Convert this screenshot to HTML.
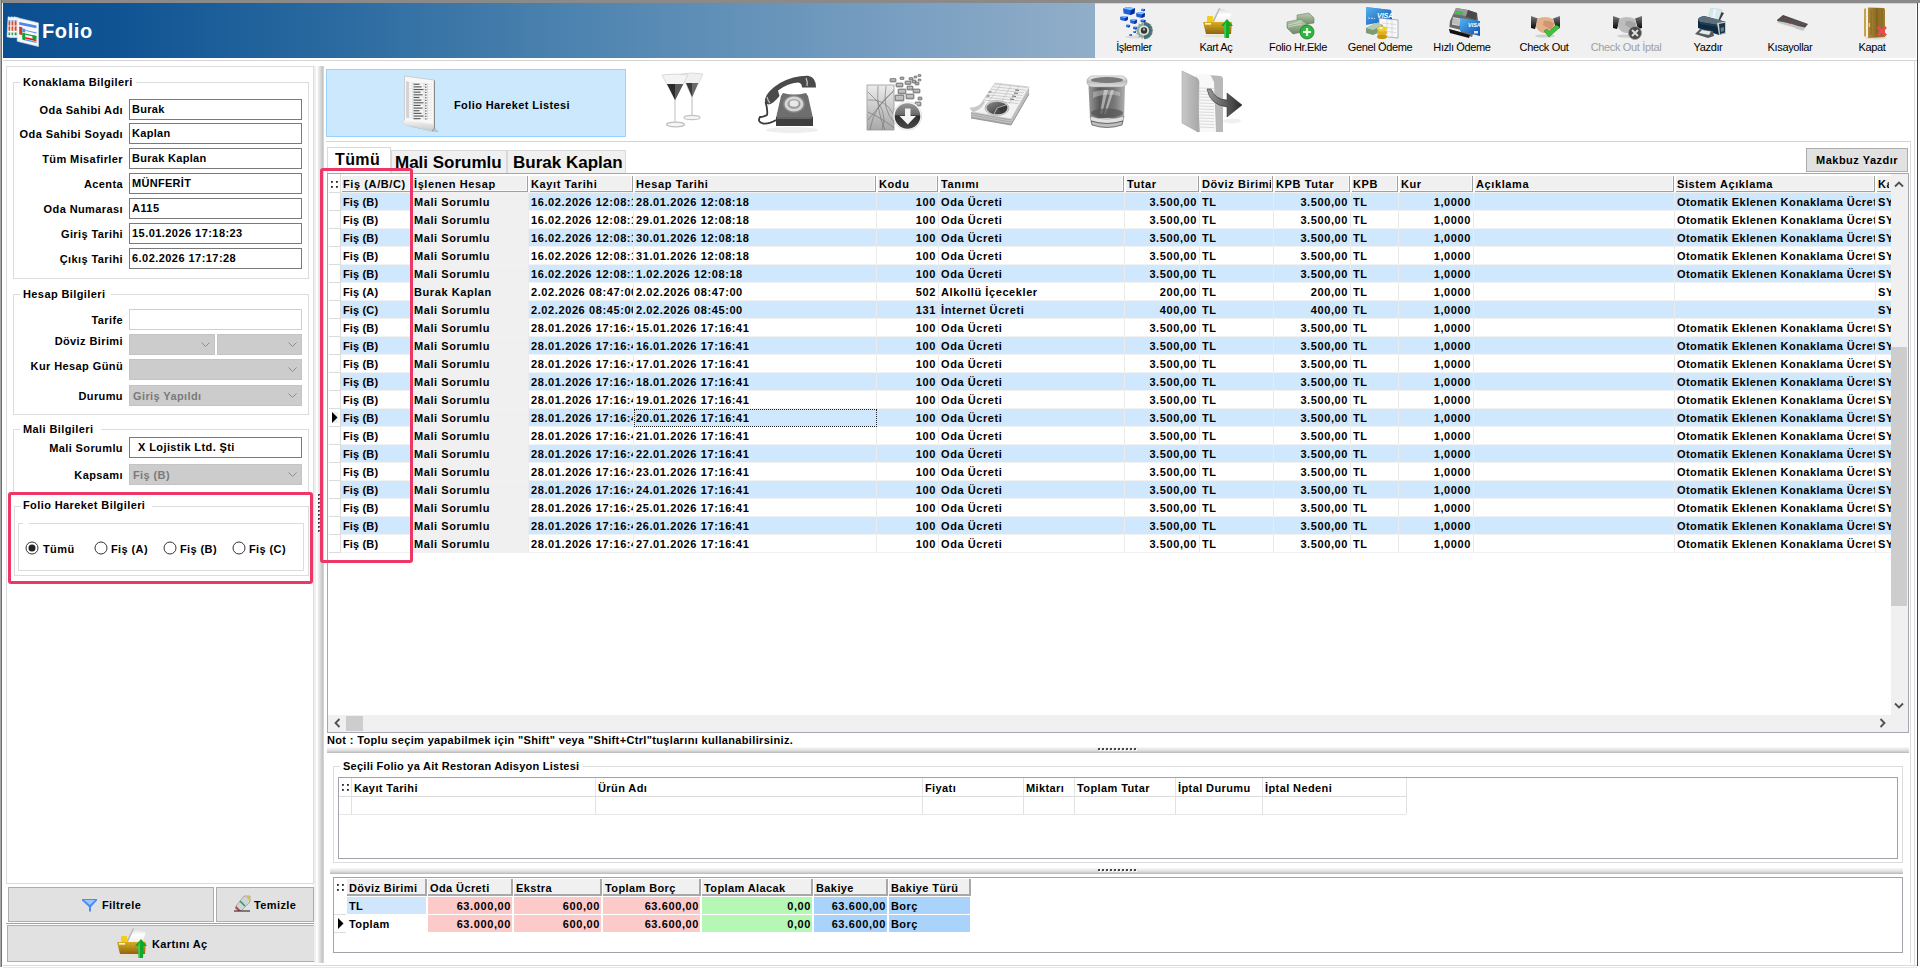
<!DOCTYPE html><html><head><meta charset="utf-8"><style>
html,body{margin:0;padding:0;}
body{width:1920px;height:969px;overflow:hidden;position:relative;background:#fff;font-family:"Liberation Sans",sans-serif;font-weight:bold;font-size:11px;color:#000;}
body div{position:absolute;box-sizing:border-box;}
.t{white-space:nowrap;}
svg{position:absolute;overflow:visible;}
</style></head><body>
<svg width="0" height="0" style="position:absolute"><defs>
<linearGradient id="gBlue" x1="0" y1="0" x2="1" y2="1"><stop offset="0" stop-color="#6fb7ff"/><stop offset="1" stop-color="#0b49c9"/></linearGradient>
<linearGradient id="gFold" x1="0" y1="0" x2="0" y2="1"><stop offset="0" stop-color="#f6d24a"/><stop offset="1" stop-color="#a77a12"/></linearGradient>
<linearGradient id="gGreen" x1="0" y1="0" x2="1" y2="0"><stop offset="0" stop-color="#35d04a"/><stop offset="1" stop-color="#0a8a1c"/></linearGradient>
<linearGradient id="gMoney" x1="0" y1="0" x2="0" y2="1"><stop offset="0" stop-color="#b9cdb0"/><stop offset="1" stop-color="#6f8a66"/></linearGradient>
<linearGradient id="gCard" x1="0" y1="0" x2="1" y2="1"><stop offset="0" stop-color="#55b4f0"/><stop offset="1" stop-color="#0b4fb0"/></linearGradient>
<linearGradient id="gDoor" x1="0" y1="0" x2="1" y2="0"><stop offset="0" stop-color="#c9a35a"/><stop offset="1" stop-color="#7a5a1c"/></linearGradient>
<linearGradient id="gSleeve" x1="0" y1="0" x2="0" y2="1"><stop offset="0" stop-color="#777"/><stop offset="1" stop-color="#050505"/></linearGradient>
<linearGradient id="gGray" x1="0" y1="0" x2="1" y2="0"><stop offset="0" stop-color="#bdbdbd"/><stop offset="0.5" stop-color="#eeeeee"/><stop offset="1" stop-color="#9a9a9a"/></linearGradient>
<linearGradient id="gDark" x1="0" y1="0" x2="0" y2="1"><stop offset="0" stop-color="#8a8a8a"/><stop offset="1" stop-color="#3a3a3a"/></linearGradient>
<radialGradient id="gCoin" cx="0.4" cy="0.4" r="0.7"><stop offset="0" stop-color="#ffe97a"/><stop offset="1" stop-color="#c98f10"/></radialGradient>
<linearGradient id="gTrash" x1="0" y1="0" x2="1" y2="0"><stop offset="0" stop-color="#9a9a9a"/><stop offset="0.3" stop-color="#5a5a5a"/><stop offset="0.7" stop-color="#777"/><stop offset="1" stop-color="#b0b0b0"/></linearGradient>
</defs></svg>
<div style="left:0px;top:0px;width:1920px;height:3px;background:#8a8a8a;"></div>
<div style="left:0px;top:0px;width:1px;height:967px;background:#a8a8a8;"></div>
<div style="left:1px;top:0px;width:1px;height:967px;background:#6e6e6e;"></div>
<div style="left:1917px;top:3px;width:1px;height:963px;background:#0a4fb4;"></div>
<div style="left:3px;top:965px;width:1914px;height:1px;background:#dadada;"></div>
<div style="left:3px;top:967px;width:1914px;height:1px;background:#e8e8e8;"></div>
<div style="left:3px;top:3px;width:1092px;height:55px;background:linear-gradient(90deg,#0b4f90 0%,#0f5393 10%,#2a6aa0 30%,#5186b1 55%,#769dc0 80%,#91aec9 100%);"></div>
<svg style="left:7px;top:15px" width="32" height="32" viewBox="2 1 31.5 36.5" preserveAspectRatio="none"><path d="M3 3 L7 4 L7 27 L2 26 Z" fill="#f4f7fb" stroke="#dfe6ee" stroke-width="0.5"/><rect x="3.5" y="7" width="2" height="2" fill="#5a8de8"/><rect x="3.5" y="9" width="2" height="4" fill="#d04a2a"/><rect x="3.5" y="14" width="2" height="3" fill="#d04a2a"/><rect x="3.5" y="17" width="2" height="2" fill="#d04a2a"/><rect x="3.5" y="21" width="2" height="3" fill="#1a9a3a"/><path d="M6 3 L10 4 L10 27 L5 26 Z" fill="#f4f7fb" stroke="#dfe6ee" stroke-width="0.5"/><rect x="6.5" y="7" width="2" height="2" fill="#5a8de8"/><rect x="6.5" y="9" width="2" height="4" fill="#d04a2a"/><rect x="6.5" y="14" width="2" height="3" fill="#d04a2a"/><rect x="6.5" y="17" width="2" height="2" fill="#d04a2a"/><rect x="6.5" y="21" width="2" height="3" fill="#1a9a3a"/><path d="M9 3 L13 4 L13 27 L8 26 Z" fill="#f4f7fb" stroke="#dfe6ee" stroke-width="0.5"/><rect x="9.5" y="7" width="2" height="2" fill="#5a8de8"/><rect x="9.5" y="9" width="2" height="4" fill="#d04a2a"/><rect x="9.5" y="14" width="2" height="3" fill="#d04a2a"/><rect x="9.5" y="17" width="2" height="2" fill="#d04a2a"/><rect x="9.5" y="21" width="2" height="3" fill="#1a9a3a"/><path d="M12 4 L33 10 L33 37 L12 31 Z" fill="#f6f8fb" stroke="#d9dee6" stroke-width="0.6"/><path d="M14 9 L31 13 L31 16 L14 12 Z" fill="#4f86ea"/><path d="M14 14 L17 15 L17 24 L14 23 Z" fill="#d23a1a"/><path d="M17 16 L20 17 L20 21 L17 20 Z" fill="#5a8cf0"/><path d="M17 21 L20 21.7 L20 30 L17 29 Z" fill="#12a52c"/><path d="M20 18 L31 21 L31 22 L20 19 Z" fill="#4f86ea"/><path d="M20 22 L31 25 L31 26.5 L20 23.5 Z" fill="#12a52c"/><path d="M27 24 L31 25 L31 29 L27 28 Z" fill="#12a52c"/><path d="M20 26 L31 29 L31 31 L20 28 Z" fill="#e82010"/><path d="M20 28.5 L31 31.5 L31 33 L20 30 Z" fill="#5a9af0"/></svg>
<div class="t " style="left:42px;top:18.07px;font-size:20px;line-height:26px;color:#fff;letter-spacing:0.6px;">Folio</div>
<div style="left:1095px;top:3px;width:822px;height:1px;background:#c9d8e6;"></div>
<div style="left:1095px;top:4px;width:821px;height:54px;background:#f0f0f0;"></div>
<div style="left:3px;top:60px;width:1914px;height:1px;background:#d4d4d4;"></div>
<svg style="left:1115px;top:4px" width="42" height="38" viewBox="0 0 42 38"><path d="M8 4.6 L12.2 3 L20 4.2 L19.4 9.4 L15.2 11 L8.6 9.4 Z" fill="#1f5fd8"/><path d="M8 4.6 L12.2 3 L20 4.2 L15.8 6.2 Z" fill="#7cc0ff"/><path d="M15.8 6.2 L20 4.2 L19.4 9.4 L15.2 11 Z" fill="#0a2a9a"/><path d="M26 5.22 L27.4 4.7 L30 5.09 L29.8 6.78 L28.4 7.3 L26.2 6.78 Z" fill="#1f5fd8"/><path d="M26 5.22 L27.4 4.7 L30 5.09 L28.6 5.74 Z" fill="#7cc0ff"/><path d="M28.6 5.74 L30 5.09 L29.8 6.78 L28.4 7.3 Z" fill="#0a2a9a"/><path d="M21.0 9.2 L24.15 8 L30.0 8.9 L29.55 12.8 L26.4 14 L21.45 12.8 Z" fill="#1f5fd8"/><path d="M21.0 9.2 L24.15 8 L30.0 8.9 L26.85 10.4 Z" fill="#7cc0ff"/><path d="M26.85 10.4 L30.0 8.9 L29.55 12.8 L26.4 14 Z" fill="#0a2a9a"/><path d="M5 13.0 L7.8 12.0 L13 12.75 L12.6 16.0 L9.8 17.0 L5.4 16.0 Z" fill="#1f5fd8"/><path d="M5 13.0 L7.8 12.0 L13 12.75 L10.2 14.0 Z" fill="#7cc0ff"/><path d="M10.2 14.0 L13 12.75 L12.6 16.0 L9.8 17.0 Z" fill="#0a2a9a"/><path d="M15.0 16.0 L17.45 15.0 L22.0 15.75 L21.65 19.0 L19.2 20.0 L15.35 19.0 Z" fill="#1f5fd8"/><path d="M15.0 16.0 L17.45 15.0 L22.0 15.75 L19.55 17.0 Z" fill="#7cc0ff"/><path d="M19.55 17.0 L22.0 15.75 L21.65 19.0 L19.2 20.0 Z" fill="#0a2a9a"/><path d="M25.5 16.1 L27.25 15.5 L30.5 15.95 L30.25 17.9 L28.5 18.5 L25.75 17.9 Z" fill="#1f5fd8"/><path d="M25.5 16.1 L27.25 15.5 L30.5 15.95 L28.75 16.7 Z" fill="#7cc0ff"/><path d="M28.75 16.7 L30.5 15.95 L30.25 17.9 L28.5 18.5 Z" fill="#0a2a9a"/><path d="M11 21.1 L12.4 20.5 L15 20.95 L14.8 22.9 L13.4 23.5 L11.2 22.9 Z" fill="#1f5fd8"/><path d="M11 21.1 L12.4 20.5 L15 20.95 L13.6 21.7 Z" fill="#7cc0ff"/><path d="M13.6 21.7 L15 20.95 L14.8 22.9 L13.4 23.5 Z" fill="#0a2a9a"/><path d="M18 23.1 L19.4 22.5 L22 22.95 L21.8 24.9 L20.4 25.5 L18.2 24.9 Z" fill="#1f5fd8"/><path d="M18 23.1 L19.4 22.5 L22 22.95 L20.6 23.7 Z" fill="#7cc0ff"/><path d="M20.6 23.7 L22 22.95 L21.8 24.9 L20.4 25.5 Z" fill="#0a2a9a"/><path d="M18.0 27.4 L19.05 27 L21.0 27.3 L20.85 28.6 L19.8 29 L18.15 28.6 Z" fill="#1f5fd8"/><path d="M18.0 27.4 L19.05 27 L21.0 27.3 L19.95 27.8 Z" fill="#7cc0ff"/><path d="M19.95 27.8 L21.0 27.3 L20.85 28.6 L19.8 29 Z" fill="#0a2a9a"/><path d="M14.0 30.4 L15.05 30 L17.0 30.3 L16.85 31.6 L15.8 32 L14.15 31.6 Z" fill="#1f5fd8"/><path d="M14.0 30.4 L15.05 30 L17.0 30.3 L15.95 30.8 Z" fill="#7cc0ff"/><path d="M15.95 30.8 L17.0 30.3 L16.85 31.6 L15.8 32 Z" fill="#0a2a9a"/><ellipse cx="22" cy="33" rx="12" ry="1.5" fill="#ccc" opacity="0.6"/><polygon points="37.80,26.50 35.63,28.01 36.93,30.32 34.32,30.74 34.49,33.38 31.95,32.63 30.96,35.08 29.00,33.30 27.04,35.08 26.05,32.63 23.51,33.38 23.68,30.74 21.07,30.32 22.37,28.01 20.20,26.50 22.37,24.99 21.07,22.68 23.68,22.26 23.51,19.62 26.05,20.37 27.04,17.92 29.00,19.70 30.96,17.92 31.95,20.37 34.49,19.62 34.32,22.26 36.93,22.68 35.63,24.99" fill="#8fa8a0"/><path d="M29 17.7 A8.8 8.8 0 0 1 29 35.3 Z" fill="#2e5a66" opacity="0.75"/><circle cx="29" cy="26.5" r="5" fill="#dfe8d8"/><circle cx="29" cy="26.5" r="3.2" fill="#333"/><circle cx="29" cy="25.5" r="1.2" fill="#aaa"/></svg>
<svg style="left:1195px;top:3px" width="45" height="39" viewBox="0 0 45 39"><defs><linearGradient id="gPap" x1="0" y1="0" x2="0" y2="1"><stop offset="0" stop-color="#d8d8d8"/><stop offset="0.5" stop-color="#ffffff"/><stop offset="1" stop-color="#f0f0f0"/></linearGradient><linearGradient id="gFold2" x1="0" y1="0" x2="0" y2="1"><stop offset="0" stop-color="#d8ae22"/><stop offset="1" stop-color="#8f6410"/></linearGradient></defs><path d="M17 19 L24 5 L37 9.5 L33 19 Z" fill="url(#gPap)"/><path d="M17 19 L24 5 L25 6 L19 19 Z" fill="#b8b8b8"/><path d="M12 14 Q12 13 13 13 L17 13 Q18 13 18 14 L18 19 L12 19 Z" fill="#f2cc18"/><path d="M8 19 L37 19 L36 31 L11 31 Z" fill="url(#gFold2)"/><rect x="10" y="20" width="6" height="1.6" fill="#fff4c8"/><ellipse cx="22" cy="33" rx="13" ry="1.5" fill="#e8dcc0" opacity="0.7"/><path d="M32 16 L38 23 L34.5 23 L34 35 L29.5 35 L29 23 L26 23 Z" fill="#10a828"/><path d="M32 16 L29 23 L29.5 35 L31 35 L31 19 Z" fill="#5ee070" opacity="0.6"/></svg>
<svg style="left:1285px;top:12px" width="32" height="32" viewBox="0 0 32 32"><path d="M12 3 L24 1 L29 6 L29 11 L17 13 L12 8 Z" fill="url(#gMoney)" stroke="#5c7356" stroke-width="0.5"/><path d="M2 10 L16 7 L22 12 L22 19 L8 22 L2 16 Z" fill="url(#gMoney)" stroke="#5c7356" stroke-width="0.5"/><path d="M3 13 L16 10 M3 15 L17 12" stroke="#e8f0e0" stroke-width="0.6"/><circle cx="22" cy="20" r="7" fill="#2db83d" stroke="#1a7a26" stroke-width="0.8"/><path d="M22 16 L22 24 M18 20 L26 20" stroke="#e8ffe8" stroke-width="2.2"/></svg>
<svg style="left:1360px;top:4px" width="42" height="38" viewBox="0 0 42 38"><path d="M6 3 L31 6 L32 15 L6 20 Z" fill="url(#gCard)"/><path d="M6 3 L31 6 L32 16 L6 21 Z" fill="url(#gCard)"/><text x="17" y="13.5" font-size="7" font-weight="bold" fill="#fff" font-family="Liberation Sans" font-style="italic">VISA</text><path d="M8 14 L15 14.5" stroke="#bfe0ff" stroke-width="1" stroke-dasharray="2 1"/><path d="M19 14 L38 16 L38 34 L19 32 Z" fill="#f8f8f8" stroke="#7d96aa" stroke-width="0.7"/><path d="M22 19 L36 20.5 M22 23 L36 24.5 M22 27 L36 28.5 M27 15 L27 33 M32 15.5 L32 33.5" stroke="#c8c8c8" stroke-width="0.6"/><path d="M6 24 L16 19 L23 21 L23 27 L13 31 L6 29 Z" fill="#7d9a78"/><path d="M6 24 L16 19 L23 21 L13 26 Z" fill="#b4ccb0"/><ellipse cx="22" cy="32.5" rx="5" ry="2.6" fill="#c9960e"/><ellipse cx="22" cy="28.5" rx="5" ry="2.6" fill="#e0b020"/><ellipse cx="22" cy="24.8" rx="5" ry="2.6" fill="#f2cc30"/><ellipse cx="21" cy="24" rx="2" ry="1" fill="#fff6b0"/></svg>
<svg style="left:1440px;top:3px" width="42" height="38" viewBox="0 0 42 38"><path d="M16 5 L28 7 L37 10 L38 17 L32 34 L9 27 L10 18 Z" fill="#6a6a6a"/><path d="M16 5 L28 7 L26 13 L14 11 Z" fill="#9a9a9a"/><path d="M28 7 L37 10 L36 17 L26 14 Z" fill="#4a4a4a"/><path d="M16 8 L23 9.5 L22.5 12 L15.5 10.5 Z" fill="#28d428" stroke="#8a6aa0" stroke-width="0.4"/><path d="M13 14 L20 15.5 L19.5 23 L12 21.5 Z" fill="#dcdcdc"/><path d="M14 15 L14 21 M16 15.5 L16 21.5 M18 16 L18 22" stroke="#777" stroke-width="0.6"/><path d="M9 24 L21 27 L21 29 L9 26 Z" fill="#f0f0f0"/><path d="M9 26 L30 32 L29 35 L10 30 Z" fill="#111"/><path d="M20 15 L40 18 L40 33 L20 28 Z" fill="url(#gCard)"/><text x="28" y="24" font-size="5.5" font-weight="bold" font-style="italic" fill="#fff" font-family="Liberation Sans">VISA</text><rect x="34" y="28" width="4" height="2.5" fill="#dde" /></svg>
<svg style="left:1529px;top:9px" width="34" height="32" viewBox="0 0 34 32"><path d="M2 7 L9 9.5 L6 20 L2 19 Z" fill="url(#gSleeve)"/><path d="M31 7 L24 9.5 L27 20 L31 19 Z" fill="url(#gSleeve)"/><path d="M8 10 Q16 6 24 10 L26 18 Q22 24 16 24 Q10 24 7 18 Z" fill="#e2b08a"/><path d="M15 12 Q21 11 25 15 L22 21 Q18 18 14 16 Z" fill="#c98a62" opacity="0.7"/><ellipse cx="16" cy="27" rx="10" ry="1.6" fill="#bbb" opacity="0.6"/><path d="M15 22 L20 28 L31 18 L27 16 L20 23 L18 20 Z" fill="#3cc43c" stroke="#1f8f1f" stroke-width="0.6"/></svg>
<svg style="left:1611px;top:9px" width="34" height="32" viewBox="0 0 34 32"><path d="M2 7 L9 9.5 L6 20 L2 19 Z" fill="url(#gSleeve)"/><path d="M31 7 L24 9.5 L27 20 L31 19 Z" fill="url(#gSleeve)"/><path d="M8 10 Q16 6 24 10 L26 18 Q22 24 16 24 Q10 24 7 18 Z" fill="#bdbdbd"/><path d="M15 12 Q21 11 25 15 L22 21 Q18 18 14 16 Z" fill="#9a9a9a" opacity="0.7"/><ellipse cx="16" cy="27" rx="10" ry="1.6" fill="#bbb" opacity="0.6"/><circle cx="24" cy="24" r="6.5" fill="#4a4a4a" stroke="#999" stroke-width="0.8"/><path d="M21 21 L27 27 M27 21 L21 27" stroke="#ddd" stroke-width="2"/></svg>
<svg style="left:1688px;top:3px" width="45" height="39" viewBox="0 0 45 39"><path d="M33 9 L36 10 L31 19 L29 18 Z" fill="#3a3a3a"/><path d="M23 5 L34 7 L30 18 L20 16 Z" fill="#d8eaf0" stroke="#b0c8d0" stroke-width="0.5"/><path d="M27 6 L25 17" stroke="#f4fbff" stroke-width="1.5"/><path d="M10 17 Q10 14 16 13 L31 17 L38 19 L38 30 L31 32 L10 25 Z" fill="#0d2a40"/><path d="M10 17 Q10 14 16 13 L31 17 L38 19 L30 22 L12 19 Z" fill="#5e6e7a"/><path d="M12 19 L30 22 L30 24 L12 21 Z" fill="#1e3e56"/><path d="M29 20 L38 18.5 L38 30 L31 32 Z" fill="#c8cdd0"/><path d="M31 21 L37 19.8 L37 29.5 L32 31 Z" fill="#1c3446"/><path d="M32.5 25 L36 24 L36 28 L33 29 Z" fill="#7a9ab0" opacity="0.7"/><path d="M7 31 L12 26 L25 28 L26 33 L20 35 Z" fill="#5a5a5a"/><path d="M11 30 L14 27 L23 28.5 L21 32 Z" fill="#dcecf2"/></svg>
<svg style="left:1770px;top:3px" width="45" height="39" viewBox="0 0 45 39"><path d="M7 17 L13 12 L38 21 L33 28 Q28 27 22 24 Q14 22 8 20 Z" fill="#c4c4c4"/><path d="M7 17 L13 12 L38 21 L35 24.5 Q28 23 22 21 Q14 19 7.5 18 Z" fill="#4a4a4a"/><path d="M10 16 L35 22 M12 14.5 L36 21 M9 17.5 L30 22" stroke="#777" stroke-width="0.5" stroke-dasharray="1.2 0.8"/><rect x="14.5" y="15" width="1.6" height="1.2" fill="#c82828"/><rect x="20.5" y="17.5" width="1.6" height="1.2" fill="#c82828"/><rect x="19" y="19.3" width="1.6" height="1.2" fill="#c82828"/><rect x="26.5" y="18.5" width="1.6" height="1.2" fill="#c82828"/><path d="M8 20 Q14 22 22 24 Q28 27 33 28" fill="none" stroke="#e8e8e8" stroke-width="0.8"/></svg>
<svg style="left:1860px;top:7px" width="30" height="34" viewBox="0 0 30 34"><defs><linearGradient id="gDoor2" x1="0" y1="0" x2="1" y2="0"><stop offset="0" stop-color="#b08a3a"/><stop offset="0.5" stop-color="#8a6a22"/><stop offset="1" stop-color="#a07c30"/></linearGradient></defs><ellipse cx="16" cy="31" rx="11" ry="1.5" fill="#d8d0c0" opacity="0.7"/><path d="M4 2 L6 1 L6 30 L4 29 Z" fill="#c8a050"/><path d="M6 1 L8 0.5 L8 31 L6 30 Z" fill="#f4efe0"/><path d="M8 0.5 L24 1 Q25 1.5 25 2.5 L25 30 L8 31 Z" fill="url(#gDoor2)"/><path d="M11 3 L11 28 M17 2.5 L17 28.5 M22 2.5 L22 28.5" stroke="#6a4e14" stroke-width="0.7" opacity="0.55"/><path d="M8.8 16 L10 16 L10 20 L8.8 20 Z" fill="#e8d060"/><path d="M17.5 20 L26 28.5 M26 20 L17.5 28.5" stroke="#f04658" stroke-width="2.6"/></svg>
<div class="t " style="left:1084px;top:38.69px;font-size:11px;line-height:17px;color:#000;letter-spacing:-0.35px;font-weight:normal;width:100px;text-align:center;overflow:hidden;">İşlemler</div>
<div class="t " style="left:1166px;top:38.69px;font-size:11px;line-height:17px;color:#000;letter-spacing:-0.35px;font-weight:normal;width:100px;text-align:center;overflow:hidden;">Kart Aç</div>
<div class="t " style="left:1248px;top:38.69px;font-size:11px;line-height:17px;color:#000;letter-spacing:-0.35px;font-weight:normal;width:100px;text-align:center;overflow:hidden;">Folio Hr.Ekle</div>
<div class="t " style="left:1330px;top:38.69px;font-size:11px;line-height:17px;color:#000;letter-spacing:-0.35px;font-weight:normal;width:100px;text-align:center;overflow:hidden;">Genel Ödeme</div>
<div class="t " style="left:1412px;top:38.69px;font-size:11px;line-height:17px;color:#000;letter-spacing:-0.35px;font-weight:normal;width:100px;text-align:center;overflow:hidden;">Hızlı Ödeme</div>
<div class="t " style="left:1494px;top:38.69px;font-size:11px;line-height:17px;color:#000;letter-spacing:-0.35px;font-weight:normal;width:100px;text-align:center;overflow:hidden;">Check Out</div>
<div class="t " style="left:1576px;top:38.69px;font-size:11px;line-height:17px;color:#a0a0a0;letter-spacing:-0.35px;font-weight:normal;width:100px;text-align:center;overflow:hidden;">Check Out İptal</div>
<div class="t " style="left:1658px;top:38.69px;font-size:11px;line-height:17px;color:#000;letter-spacing:-0.35px;font-weight:normal;width:100px;text-align:center;overflow:hidden;">Yazdır</div>
<div class="t " style="left:1740px;top:38.69px;font-size:11px;line-height:17px;color:#000;letter-spacing:-0.35px;font-weight:normal;width:100px;text-align:center;overflow:hidden;">Kısayollar</div>
<div class="t " style="left:1822px;top:38.69px;font-size:11px;line-height:17px;color:#000;letter-spacing:-0.35px;font-weight:normal;width:100px;text-align:center;overflow:hidden;">Kapat</div>
<div style="left:6px;top:66px;width:308px;height:818px;border:1px solid #dcdcdc;"></div>
<div style="left:13px;top:82px;width:296px;height:197px;border:1px solid #dcdcdc;"></div>
<div style="left:20px;top:76px;width:116px;height:12px;background:#fff;"></div>
<div class="t " style="left:23px;top:73.69px;font-size:11px;line-height:17px;color:#000;letter-spacing:0.4px;">Konaklama Bilgileri</div>
<div class="t " style="left:0px;top:101.69px;font-size:11px;line-height:17px;color:#000;letter-spacing:0.4px;width:123px;text-align:right;overflow:hidden;">Oda Sahibi Adı</div>
<div style="left:129px;top:99px;width:173px;height:21px;border:1px solid #7a7a7a;background:#fff;"></div>
<div class="t " style="left:132px;top:100.69px;font-size:11px;line-height:17px;color:#000;letter-spacing:0.3px;">Burak</div>
<div class="t " style="left:0px;top:125.69px;font-size:11px;line-height:17px;color:#000;letter-spacing:0.4px;width:123px;text-align:right;overflow:hidden;">Oda Sahibi Soyadı</div>
<div style="left:129px;top:123px;width:173px;height:21px;border:1px solid #7a7a7a;background:#fff;"></div>
<div class="t " style="left:132px;top:124.69px;font-size:11px;line-height:17px;color:#000;letter-spacing:0.3px;">Kaplan</div>
<div class="t " style="left:0px;top:150.69px;font-size:11px;line-height:17px;color:#000;letter-spacing:0.4px;width:123px;text-align:right;overflow:hidden;">Tüm Misafirler</div>
<div style="left:129px;top:148px;width:173px;height:21px;border:1px solid #7a7a7a;background:#fff;"></div>
<div class="t " style="left:132px;top:149.69px;font-size:11px;line-height:17px;color:#000;letter-spacing:0.3px;">Burak Kaplan</div>
<div class="t " style="left:0px;top:175.69px;font-size:11px;line-height:17px;color:#000;letter-spacing:0.4px;width:123px;text-align:right;overflow:hidden;">Acenta</div>
<div style="left:129px;top:173px;width:173px;height:21px;border:1px solid #7a7a7a;background:#fff;"></div>
<div class="t " style="left:132px;top:174.69px;font-size:11px;line-height:17px;color:#000;letter-spacing:0.3px;">MÜNFERİT</div>
<div class="t " style="left:0px;top:200.69px;font-size:11px;line-height:17px;color:#000;letter-spacing:0.4px;width:123px;text-align:right;overflow:hidden;">Oda Numarası</div>
<div style="left:129px;top:198px;width:173px;height:21px;border:1px solid #7a7a7a;background:#fff;"></div>
<div class="t " style="left:132px;top:199.69px;font-size:11px;line-height:17px;color:#000;letter-spacing:0.45px;">A115</div>
<div class="t " style="left:0px;top:225.69px;font-size:11px;line-height:17px;color:#000;letter-spacing:0.4px;width:123px;text-align:right;overflow:hidden;">Giriş Tarihi</div>
<div style="left:129px;top:223px;width:173px;height:21px;border:1px solid #7a7a7a;background:#fff;"></div>
<div class="t " style="left:132px;top:224.69px;font-size:11px;line-height:17px;color:#000;letter-spacing:0.45px;">15.01.2026 17:18:23</div>
<div class="t " style="left:0px;top:250.69px;font-size:11px;line-height:17px;color:#000;letter-spacing:0.4px;width:123px;text-align:right;overflow:hidden;">Çıkış Tarihi</div>
<div style="left:129px;top:248px;width:173px;height:21px;border:1px solid #7a7a7a;background:#fff;"></div>
<div class="t " style="left:132px;top:249.69px;font-size:11px;line-height:17px;color:#000;letter-spacing:0.45px;">6.02.2026 17:17:28</div>
<div style="left:13px;top:294px;width:296px;height:121px;border:1px solid #dcdcdc;"></div>
<div style="left:20px;top:288px;width:91px;height:12px;background:#fff;"></div>
<div class="t " style="left:23px;top:285.69px;font-size:11px;line-height:17px;color:#000;letter-spacing:0.4px;">Hesap Bilgileri</div>
<div class="t " style="left:0px;top:311.69px;font-size:11px;line-height:17px;color:#000;letter-spacing:0.4px;width:123px;text-align:right;overflow:hidden;">Tarife</div>
<div style="left:129px;top:309px;width:173px;height:21px;border:1px solid #cfcfcf;background:#fff;"></div>
<div class="t " style="left:0px;top:332.69px;font-size:11px;line-height:17px;color:#000;letter-spacing:0.4px;width:123px;text-align:right;overflow:hidden;">Döviz Birimi</div>
<div style="left:129px;top:334px;width:86px;height:21px;background:#cccccc;border:1px solid #c4c4c4;"></div>
<svg style="left:201px;top:342px" width="10" height="6"><path d="M0.5 0.5 L4.5 4.5 L8.5 0.5" fill="none" stroke="#8c8c8c" stroke-width="1"/></svg>
<div style="left:217px;top:334px;width:85px;height:21px;background:#cccccc;border:1px solid #c4c4c4;"></div>
<svg style="left:288px;top:342px" width="10" height="6"><path d="M0.5 0.5 L4.5 4.5 L8.5 0.5" fill="none" stroke="#8c8c8c" stroke-width="1"/></svg>
<div class="t " style="left:0px;top:357.69px;font-size:11px;line-height:17px;color:#000;letter-spacing:0.4px;width:123px;text-align:right;overflow:hidden;">Kur Hesap Günü</div>
<div style="left:129px;top:359px;width:173px;height:21px;background:#cccccc;border:1px solid #c4c4c4;"></div>
<svg style="left:288px;top:367px" width="10" height="6"><path d="M0.5 0.5 L4.5 4.5 L8.5 0.5" fill="none" stroke="#8c8c8c" stroke-width="1"/></svg>
<div class="t " style="left:0px;top:387.69px;font-size:11px;line-height:17px;color:#000;letter-spacing:0.4px;width:123px;text-align:right;overflow:hidden;">Durumu</div>
<div style="left:129px;top:385px;width:173px;height:21px;background:#cccccc;border:1px solid #c4c4c4;"></div>
<svg style="left:288px;top:393px" width="10" height="6"><path d="M0.5 0.5 L4.5 4.5 L8.5 0.5" fill="none" stroke="#8c8c8c" stroke-width="1"/></svg>
<div class="t " style="left:133px;top:387.69px;font-size:11px;line-height:17px;color:#7a7a7a;letter-spacing:0.4px;">Giriş Yapıldı</div>
<div style="left:13px;top:429px;width:296px;height:140px;border:1px solid #dcdcdc;"></div>
<div style="left:20px;top:423px;width:81px;height:12px;background:#fff;"></div>
<div class="t " style="left:23px;top:420.69px;font-size:11px;line-height:17px;color:#000;letter-spacing:0.4px;">Mali Bilgileri</div>
<div class="t " style="left:0px;top:439.69px;font-size:11px;line-height:17px;color:#000;letter-spacing:0.4px;width:123px;text-align:right;overflow:hidden;">Mali Sorumlu</div>
<div style="left:129px;top:437px;width:173px;height:21px;border:1px solid #7a7a7a;background:#fff;"></div>
<div class="t " style="left:138px;top:438.69px;font-size:11px;line-height:17px;color:#000;letter-spacing:0.4px;">X Lojistik Ltd. Şti</div>
<div class="t " style="left:0px;top:466.69px;font-size:11px;line-height:17px;color:#000;letter-spacing:0.4px;width:123px;text-align:right;overflow:hidden;">Kapsamı</div>
<div style="left:129px;top:464px;width:173px;height:21px;background:#cccccc;border:1px solid #c4c4c4;"></div>
<svg style="left:288px;top:472px" width="10" height="6"><path d="M0.5 0.5 L4.5 4.5 L8.5 0.5" fill="none" stroke="#8c8c8c" stroke-width="1"/></svg>
<div class="t " style="left:133px;top:466.69px;font-size:11px;line-height:17px;color:#7a7a7a;letter-spacing:0.4px;">Fiş (B)</div>
<div style="left:8px;top:492px;width:305px;height:92px;border:3px solid #ee3766;border-radius:3px;background:#fff;"></div>
<div style="left:14px;top:506px;width:295px;height:70px;border:1px solid #dcdcdc;"></div>
<div style="left:21px;top:500px;width:131px;height:12px;background:#fff;"></div>
<div class="t " style="left:23px;top:496.69px;font-size:11px;line-height:17px;color:#000;letter-spacing:0.4px;">Folio Hareket Bilgileri</div>
<div style="left:18px;top:523px;width:286px;height:48px;border:1px solid #dcdcdc;"></div>
<div style="left:23px;top:520px;width:6px;height:6px;background:#fff;"></div>
<svg style="left:25px;top:541px" width="14" height="14"><circle cx="7" cy="7" r="6" fill="#fff" stroke="#333" stroke-width="1"/><circle cx="7" cy="7" r="3.5" fill="#222"/></svg>
<div class="t " style="left:43px;top:540.69px;font-size:11px;line-height:17px;color:#000;letter-spacing:0.4px;">Tümü</div>
<svg style="left:94px;top:541px" width="14" height="14"><circle cx="7" cy="7" r="6" fill="#fff" stroke="#333" stroke-width="1"/></svg>
<div class="t " style="left:111px;top:540.69px;font-size:11px;line-height:17px;color:#000;letter-spacing:0.4px;">Fiş (A)</div>
<svg style="left:163px;top:541px" width="14" height="14"><circle cx="7" cy="7" r="6" fill="#fff" stroke="#333" stroke-width="1"/></svg>
<div class="t " style="left:180px;top:540.69px;font-size:11px;line-height:17px;color:#000;letter-spacing:0.4px;">Fiş (B)</div>
<svg style="left:232px;top:541px" width="14" height="14"><circle cx="7" cy="7" r="6" fill="#fff" stroke="#333" stroke-width="1"/></svg>
<div class="t " style="left:249px;top:540.69px;font-size:11px;line-height:17px;color:#000;letter-spacing:0.4px;">Fiş (C)</div>
<div style="left:8px;top:887px;width:206px;height:35px;background:#e1e1e1;border:1px solid #adadad;"></div>
<div class="t " style="left:102px;top:896.69px;font-size:11px;line-height:17px;color:#000;letter-spacing:0.4px;">Filtrele</div>
<svg style="left:82px;top:899px" width="16" height="13" viewBox="0 0 16 13"><path d="M0 0 L15 0 L15 1.5 L9 8 L9 12.5 L7 12.5 L7 8 L0 1.5 Z" fill="#4a8cf0"/><path d="M2 1 L13 1 L8 6 Z" fill="#9cc4ff"/></svg>
<div style="left:216px;top:887px;width:98px;height:35px;background:#e1e1e1;border:1px solid #adadad;"></div>
<div class="t " style="left:254px;top:896.69px;font-size:11px;line-height:17px;color:#000;letter-spacing:0.4px;">Temizle</div>
<svg style="left:234px;top:896px" width="16" height="16" viewBox="0 0 16 16"><path d="M10 0 L16 0 L16 6 L7 15 L2 10 Z" fill="#cfd4d8" stroke="#777" stroke-width="0.5"/><path d="M12 1 L16 0 L16 5 Z" fill="#e8c020"/><path d="M6 5 L11 10" stroke="#2a9a5a" stroke-width="1.5"/><path d="M2 10 L7 15 L4 15 L1 12 Z" fill="#d04040"/><path d="M0 15 L16 15" stroke="#444" stroke-width="1.3"/></svg>
<div style="left:6px;top:923px;width:309px;height:1px;background:#a0a0a0;"></div>
<div style="left:7px;top:925px;width:308px;height:37px;background:#e1e1e1;border:1px solid #adadad;"></div>
<div class="t " style="left:152px;top:935.69px;font-size:11px;line-height:17px;color:#000;letter-spacing:0.4px;">Kartını Aç</div>
<svg style="left:109px;top:923px" width="45" height="39" viewBox="0 0 45 39"><defs><linearGradient id="gPap" x1="0" y1="0" x2="0" y2="1"><stop offset="0" stop-color="#d8d8d8"/><stop offset="0.5" stop-color="#ffffff"/><stop offset="1" stop-color="#f0f0f0"/></linearGradient><linearGradient id="gFold2" x1="0" y1="0" x2="0" y2="1"><stop offset="0" stop-color="#d8ae22"/><stop offset="1" stop-color="#8f6410"/></linearGradient></defs><path d="M17 19 L24 5 L37 9.5 L33 19 Z" fill="url(#gPap)"/><path d="M17 19 L24 5 L25 6 L19 19 Z" fill="#b8b8b8"/><path d="M12 14 Q12 13 13 13 L17 13 Q18 13 18 14 L18 19 L12 19 Z" fill="#f2cc18"/><path d="M8 19 L37 19 L36 31 L11 31 Z" fill="url(#gFold2)"/><rect x="10" y="20" width="6" height="1.6" fill="#fff4c8"/><ellipse cx="22" cy="33" rx="13" ry="1.5" fill="#e8dcc0" opacity="0.7"/><path d="M32 16 L38 23 L34.5 23 L34 35 L29.5 35 L29 23 L26 23 Z" fill="#10a828"/><path d="M32 16 L29 23 L29.5 35 L31 35 L31 19 Z" fill="#5ee070" opacity="0.6"/></svg>
<div style="left:314px;top:66px;width:10px;height:897px;background:linear-gradient(90deg,#f0f0f0 0px,#f0f0f0 2px,#fff 2.5px,#fff 3px,#f2f2f2 4px,#c0c0c0 9px,#e8e8e8 10px);"></div>
<svg style="left:318px;top:494px" width="3" height="3"><rect x="0" y="0" width="2" height="2" fill="#444"/><rect x="1" y="1" width="2" height="2" fill="#fff" opacity="0.7"/><rect x="0" y="0" width="1.5" height="1.5" fill="#444"/></svg>
<svg style="left:318px;top:498px" width="3" height="3"><rect x="0" y="0" width="2" height="2" fill="#444"/><rect x="1" y="1" width="2" height="2" fill="#fff" opacity="0.7"/><rect x="0" y="0" width="1.5" height="1.5" fill="#444"/></svg>
<svg style="left:318px;top:502px" width="3" height="3"><rect x="0" y="0" width="2" height="2" fill="#444"/><rect x="1" y="1" width="2" height="2" fill="#fff" opacity="0.7"/><rect x="0" y="0" width="1.5" height="1.5" fill="#444"/></svg>
<svg style="left:318px;top:506px" width="3" height="3"><rect x="0" y="0" width="2" height="2" fill="#444"/><rect x="1" y="1" width="2" height="2" fill="#fff" opacity="0.7"/><rect x="0" y="0" width="1.5" height="1.5" fill="#444"/></svg>
<svg style="left:318px;top:510px" width="3" height="3"><rect x="0" y="0" width="2" height="2" fill="#444"/><rect x="1" y="1" width="2" height="2" fill="#fff" opacity="0.7"/><rect x="0" y="0" width="1.5" height="1.5" fill="#444"/></svg>
<svg style="left:318px;top:514px" width="3" height="3"><rect x="0" y="0" width="2" height="2" fill="#444"/><rect x="1" y="1" width="2" height="2" fill="#fff" opacity="0.7"/><rect x="0" y="0" width="1.5" height="1.5" fill="#444"/></svg>
<svg style="left:318px;top:518px" width="3" height="3"><rect x="0" y="0" width="2" height="2" fill="#444"/><rect x="1" y="1" width="2" height="2" fill="#fff" opacity="0.7"/><rect x="0" y="0" width="1.5" height="1.5" fill="#444"/></svg>
<svg style="left:318px;top:522px" width="3" height="3"><rect x="0" y="0" width="2" height="2" fill="#444"/><rect x="1" y="1" width="2" height="2" fill="#fff" opacity="0.7"/><rect x="0" y="0" width="1.5" height="1.5" fill="#444"/></svg>
<svg style="left:318px;top:526px" width="3" height="3"><rect x="0" y="0" width="2" height="2" fill="#444"/><rect x="1" y="1" width="2" height="2" fill="#fff" opacity="0.7"/><rect x="0" y="0" width="1.5" height="1.5" fill="#444"/></svg>
<svg style="left:318px;top:530px" width="3" height="3"><rect x="0" y="0" width="2" height="2" fill="#444"/><rect x="1" y="1" width="2" height="2" fill="#fff" opacity="0.7"/><rect x="0" y="0" width="1.5" height="1.5" fill="#444"/></svg>
<div style="left:323px;top:60px;width:1592px;height:906px;border-right:1px solid #dcdcdc;"></div>
<div style="left:326px;top:69px;width:300px;height:68px;background:#cce8fc;border:1px solid #99d1ff;"></div>
<div class="t " style="left:454px;top:96.69px;font-size:11px;line-height:17px;color:#000;letter-spacing:0.4px;">Folio Hareket Listesi</div>
<svg style="left:395px;top:70px" width="50" height="66" viewBox="0 0 50 66"><defs><linearGradient id="gStand" x1="0" y1="0" x2="0" y2="1"><stop offset="0" stop-color="#f6f6f6"/><stop offset="1" stop-color="#c8c8c8"/></linearGradient></defs><path d="M12 56 L40 62 L44 62 L40 58 Z" fill="#9ab4cc" opacity="0.6"/><path d="M9.5 6 L39 10 L39 58 L37 61 L8 54 Q7 53 9.5 50 Z" fill="#f8f8f8" stroke="#b8b8b8" stroke-width="0.6"/><path d="M9.5 50 L39 54 L39 58 L37 61 L8 54 Q7 53 9.5 50 Z" fill="url(#gStand)"/><path d="M39 10 L40 11 L40 58 L37.5 61.5 L37 61 L39 58 Z" fill="#8a8a8a"/><path d="M11 11 L14 11.4 L14 48 L11 47.6 Z" fill="#d4d4d4"/><path d="M11 13.00 L37 14.20" stroke="#d0d0d0" stroke-width="0.4"/><rect x="18.5" y="13.70" width="6" height="1.1" fill="#555"/><rect x="30" y="14.00" width="1.5" height="1.1" fill="#666"/><path d="M11 15.65 L37 16.85" stroke="#d0d0d0" stroke-width="0.4"/><rect x="18.5" y="16.35" width="8" height="1.1" fill="#555"/><rect x="30" y="16.65" width="1.5" height="1.1" fill="#666"/><path d="M11 18.30 L37 19.50" stroke="#d0d0d0" stroke-width="0.4"/><rect x="18.5" y="19.00" width="10" height="1.1" fill="#555"/><rect x="30" y="19.30" width="1.5" height="1.1" fill="#666"/><path d="M11 20.95 L37 22.15" stroke="#d0d0d0" stroke-width="0.4"/><rect x="18.5" y="21.65" width="7" height="1.1" fill="#555"/><rect x="30" y="21.95" width="1.5" height="1.1" fill="#666"/><path d="M11 23.60 L37 24.80" stroke="#d0d0d0" stroke-width="0.4"/><rect x="18.5" y="24.30" width="9" height="1.1" fill="#555"/><rect x="30" y="24.60" width="1.5" height="1.1" fill="#666"/><path d="M11 26.25 L37 27.45" stroke="#d0d0d0" stroke-width="0.4"/><rect x="18.5" y="26.95" width="6" height="1.1" fill="#555"/><rect x="30" y="27.25" width="1.5" height="1.1" fill="#666"/><path d="M11 28.90 L37 30.10" stroke="#d0d0d0" stroke-width="0.4"/><rect x="18.5" y="29.60" width="8" height="1.1" fill="#555"/><rect x="30" y="29.90" width="1.5" height="1.1" fill="#666"/><path d="M11 31.55 L37 32.75" stroke="#d0d0d0" stroke-width="0.4"/><rect x="18.5" y="32.25" width="10" height="1.1" fill="#555"/><rect x="30" y="32.55" width="1.5" height="1.1" fill="#666"/><path d="M11 34.20 L37 35.40" stroke="#d0d0d0" stroke-width="0.4"/><rect x="18.5" y="34.90" width="7" height="1.1" fill="#555"/><rect x="30" y="35.20" width="1.5" height="1.1" fill="#666"/><path d="M11 36.85 L37 38.05" stroke="#d0d0d0" stroke-width="0.4"/><rect x="18.5" y="37.55" width="9" height="1.1" fill="#555"/><rect x="30" y="37.85" width="1.5" height="1.1" fill="#666"/><path d="M11 39.50 L37 40.70" stroke="#d0d0d0" stroke-width="0.4"/><rect x="18.5" y="40.20" width="6" height="1.1" fill="#555"/><rect x="30" y="40.50" width="1.5" height="1.1" fill="#666"/><path d="M11 42.15 L37 43.35" stroke="#d0d0d0" stroke-width="0.4"/><rect x="18.5" y="42.85" width="8" height="1.1" fill="#555"/><rect x="30" y="43.15" width="1.5" height="1.1" fill="#666"/><path d="M11 44.80 L37 46.00" stroke="#d0d0d0" stroke-width="0.4"/><rect x="18.5" y="45.50" width="10" height="1.1" fill="#555"/><rect x="30" y="45.80" width="1.5" height="1.1" fill="#666"/><path d="M11 47.45 L37 48.65" stroke="#d0d0d0" stroke-width="0.4"/><rect x="18.5" y="48.15" width="7" height="1.1" fill="#555"/><rect x="30" y="48.45" width="1.5" height="1.1" fill="#666"/><path d="M18 12 L18 49 M29 12.5 L29 49.5 M32.5 12.7 L32.5 49.7" stroke="#c8c8c8" stroke-width="0.5"/></svg>
<svg style="left:660px;top:72px" width="46" height="58" viewBox="0 0 46 58"><path d="M21 2 Q32 0 43 2 L32 25 Z" fill="#f0f0f0" stroke="#d4d4d4" stroke-width="0.8"/><path d="M26 11 L38 11 L32 25 Z" fill="#3a3a3a"/><path d="M32 11 L38 11 L32 25 Z" fill="#6a6a6a"/><rect x="31.3" y="25" width="1.5" height="20" fill="#d0d0d0"/><ellipse cx="32" cy="45.5" rx="8" ry="2.2" fill="#f4f4f4" stroke="#c4c4c4" stroke-width="1.2"/><path d="M2 3 Q15 1 28 3 L15 28 Z" fill="#f4f4f4" stroke="#d0d0d0" stroke-width="0.8"/><path d="M7 12 L23 12 L15 28 Z" fill="#2a2a2a"/><path d="M15 12 L23 12 L15 28 Z" fill="#5a5a5a"/><rect x="14.2" y="28" width="1.6" height="24" fill="#d8d8d8"/><ellipse cx="15.5" cy="52.5" rx="9" ry="2.4" fill="#f6f6f6" stroke="#c0c0c0" stroke-width="1.3"/></svg>
<svg style="left:750px;top:70px" width="80" height="70" viewBox="0 0 80 70"><ellipse cx="42" cy="60" rx="26" ry="3" fill="#eeeeee"/><path d="M33 23 Q44 26 56 23 L58 26 L63 48 L26 48 L31 26 Z" fill="#6e6e6e"/><path d="M26 47 L63 47 L63 56 L26 56 Z" fill="#3e3e3e"/><path d="M27 48 L62 48" stroke="#8a8a8a" stroke-width="1"/><ellipse cx="44" cy="34" rx="11" ry="9" fill="#858585"/><ellipse cx="44" cy="34" rx="9.5" ry="7.5" fill="#d6d6d6"/><ellipse cx="44" cy="34" rx="6.5" ry="4.8" fill="#9a9a9a"/><ellipse cx="44" cy="33.5" rx="4.5" ry="3.2" fill="#e8e8e8"/><path d="M15 29 Q17 21 30 13 Q44 5.5 58 5.8 Q66 7 66 17.5 L52 17.5 Q52 13 48 12.5 Q38 13 28 20.5 L29.5 26 Q24 33 19 34.5 Q14 34 15 29 Z" fill="#4a4a4a"/><path d="M56 8 Q58 12 57 16" stroke="#cfcfcf" stroke-width="1.2" fill="none"/><path d="M17 27 Q18 31 20 33" stroke="#bdbdbd" stroke-width="1.2" fill="none"/><path d="M15.5 32 Q18 40 17 45 Q14 47 10 47 Q7 52 13 53.5 Q20 54 26 50" fill="none" stroke="#3a3a3a" stroke-width="1.8"/></svg>
<svg style="left:860px;top:70px" width="70" height="65" viewBox="0 0 70 65"><defs><linearGradient id="gArc" x1="0" y1="0" x2="0" y2="1"><stop offset="0" stop-color="#ececec"/><stop offset="1" stop-color="#a8a8a8"/></linearGradient><linearGradient id="gDisc" x1="0" y1="0" x2="0" y2="1"><stop offset="0" stop-color="#9a9a9a"/><stop offset="0.45" stop-color="#6a6a6a"/><stop offset="0.5" stop-color="#2e2e2e"/><stop offset="1" stop-color="#4a4a4a"/></linearGradient></defs><rect x="7" y="15" width="27" height="45" fill="url(#gArc)" stroke="#9a9a9a" stroke-width="0.8"/><path d="M18 16 Q16 40 25 60 M8 30 Q25 28 34 45 M8 50 Q20 35 34 20 M10 60 Q14 35 33 22 M8 42 Q25 50 34 58 M26 16 Q22 40 34 52 M8 22 Q30 40 22 60" fill="none" stroke="#6e6e6e" stroke-width="0.6"/><rect x="30" y="8.5" width="6" height="3.5" rx="0.8" fill="#9c9c9c" stroke="#5e5e5e" stroke-width="0.6"/><rect x="31" y="9.5" width="4" height="1.0" fill="#d8d8d8" opacity="0.6"/><rect x="40" y="7" width="4" height="2.5" rx="0.8" fill="#9c9c9c" stroke="#5e5e5e" stroke-width="0.6"/><rect x="41" y="8" width="2" height="0.6" fill="#d8d8d8" opacity="0.6"/><rect x="49" y="7.5" width="4" height="2.5" rx="0.8" fill="#9c9c9c" stroke="#5e5e5e" stroke-width="0.6"/><rect x="50" y="8.5" width="2" height="0.6" fill="#d8d8d8" opacity="0.6"/><rect x="54" y="6" width="3" height="2" rx="0.8" fill="#9c9c9c" stroke="#5e5e5e" stroke-width="0.6"/><rect x="55" y="7" width="1" height="0.6" fill="#d8d8d8" opacity="0.6"/><rect x="58" y="4.5" width="3" height="2" rx="0.8" fill="#9c9c9c" stroke="#5e5e5e" stroke-width="0.6"/><rect x="59" y="5.5" width="1" height="0.6" fill="#d8d8d8" opacity="0.6"/><rect x="36" y="13" width="7" height="4" rx="0.8" fill="#9c9c9c" stroke="#5e5e5e" stroke-width="0.6"/><rect x="37" y="14" width="5" height="1.5" fill="#d8d8d8" opacity="0.6"/><rect x="45" y="11" width="6" height="3.5" rx="0.8" fill="#9c9c9c" stroke="#5e5e5e" stroke-width="0.6"/><rect x="46" y="12" width="4" height="1.0" fill="#d8d8d8" opacity="0.6"/><rect x="52" y="10" width="4" height="3" rx="0.8" fill="#9c9c9c" stroke="#5e5e5e" stroke-width="0.6"/><rect x="53" y="11" width="2" height="0.6" fill="#d8d8d8" opacity="0.6"/><rect x="55" y="12" width="4" height="3" rx="0.8" fill="#9c9c9c" stroke="#5e5e5e" stroke-width="0.6"/><rect x="56" y="13" width="2" height="0.6" fill="#d8d8d8" opacity="0.6"/><rect x="58" y="9" width="3" height="2" rx="0.8" fill="#9c9c9c" stroke="#5e5e5e" stroke-width="0.6"/><rect x="59" y="10" width="1" height="0.6" fill="#d8d8d8" opacity="0.6"/><rect x="38" y="19" width="8" height="5" rx="0.8" fill="#9c9c9c" stroke="#5e5e5e" stroke-width="0.6"/><rect x="39" y="20" width="6" height="2.5" fill="#d8d8d8" opacity="0.6"/><rect x="47" y="16" width="6" height="4" rx="0.8" fill="#9c9c9c" stroke="#5e5e5e" stroke-width="0.6"/><rect x="48" y="17" width="4" height="1.5" fill="#d8d8d8" opacity="0.6"/><rect x="53" y="19" width="7" height="4" rx="0.8" fill="#9c9c9c" stroke="#5e5e5e" stroke-width="0.6"/><rect x="54" y="20" width="5" height="1.5" fill="#d8d8d8" opacity="0.6"/><rect x="35" y="25" width="9" height="6" rx="0.8" fill="#9c9c9c" stroke="#5e5e5e" stroke-width="0.6"/><rect x="36" y="26" width="7" height="3.5" fill="#d8d8d8" opacity="0.6"/><rect x="46" y="24" width="8" height="5" rx="0.8" fill="#9c9c9c" stroke="#5e5e5e" stroke-width="0.6"/><rect x="47" y="25" width="6" height="2.5" fill="#d8d8d8" opacity="0.6"/><rect x="58" y="27" width="4" height="3" rx="0.8" fill="#9c9c9c" stroke="#5e5e5e" stroke-width="0.6"/><rect x="59" y="28" width="2" height="0.6" fill="#d8d8d8" opacity="0.6"/><rect x="55" y="32" width="6" height="4" rx="0.8" fill="#9c9c9c" stroke="#5e5e5e" stroke-width="0.6"/><rect x="56" y="33" width="4" height="1.5" fill="#d8d8d8" opacity="0.6"/><circle cx="47.5" cy="46" r="14.3" fill="#b8b8b8"/><circle cx="47.5" cy="46" r="13.5" fill="url(#gDisc)" stroke="#f2f2f2" stroke-width="1.4"/><path d="M45 38.5 L50.5 38.5 L50.5 46 L56 46 L47.75 54.5 L39.5 46 L45 46 Z" fill="#f4f4f4"/></svg>
<svg style="left:965px;top:75px" width="70" height="55" viewBox="0 0 70 55"><defs><linearGradient id="gPie" x1="0" y1="0" x2="1" y2="1"><stop offset="0" stop-color="#8a8a8a"/><stop offset="1" stop-color="#2e2e2e"/></linearGradient></defs><path d="M6 37 L46 44 L64 13 L64 19 L46 50 L6 43 Z" fill="#a8a8a8"/><path d="M6 39 L46 46 M6 41 L46 48 M46 46 L64 15 M46 48 L64 17" stroke="#d8d8d8" stroke-width="0.6"/><path d="M6 43 L46 50 L64 19" fill="none" stroke="#8a8a8a" stroke-width="0.8"/><path d="M30 8 L64 12 L46 44 L8 37 Q5 34 5 33 Q14 33 18 26 Z" fill="#f2f2f2" stroke="#bdbdbd" stroke-width="0.6"/><path d="M5 33 Q14 33 18 26 L20 27 Q16 35 8 37 Z" fill="#c8c8c8"/><path d="M30.0 9.0 L62.0 12.5" stroke="#aaa" stroke-width="0.5"/><path d="M28.0 11.7 L60.5 15.2" stroke="#aaa" stroke-width="0.5"/><path d="M26.0 14.3 L59.0 17.8" stroke="#aaa" stroke-width="0.5"/><path d="M24.0 17.0 L57.5 20.5" stroke="#aaa" stroke-width="0.5"/><path d="M22.0 19.7 L56.0 23.2" stroke="#aaa" stroke-width="0.5"/><path d="M20.0 22.3 L54.5 25.8" stroke="#aaa" stroke-width="0.5"/><path d="M18.0 25.0 L53.0 28.5" stroke="#aaa" stroke-width="0.5"/><path d="M36 9 L24 26 M46 10.5 L36 28 M54 11 L44 29" stroke="#b0b0b0" stroke-width="0.5"/><path d="M24 16 L27 16.5 L26 18 L23 17.5 Z M22 20 L25 20.5 L24 22 L21 21.5 Z" fill="#999"/><path d="M50 15 L54 15.5 M49 18 L53 18.5 M47 21 L51 21.5 M45 24 L49 24.5" stroke="#666" stroke-width="0.9"/><ellipse cx="32" cy="33" rx="12" ry="7.5" fill="#d8d8d8" stroke="#9a9a9a" stroke-width="0.6"/><ellipse cx="32" cy="33" rx="10.5" ry="6.3" fill="url(#gPie)"/><path d="M32 33 L41 30 A10.5 6.3 0 0 1 37 38.5 Z" fill="#3a3a3a"/><path d="M32 33 L29 39.2 M32 33 L41 30" stroke="#cfcfcf" stroke-width="0.7"/></svg>
<svg style="left:1080px;top:68px" width="54" height="62" viewBox="0 0 54 62"><defs><linearGradient id="gRim" x1="0" y1="0" x2="0" y2="1"><stop offset="0" stop-color="#f4f4f4"/><stop offset="0.5" stop-color="#bdbdbd"/><stop offset="1" stop-color="#e0e0e0"/></linearGradient></defs><path d="M8.5 18 L45 18 L44 50 L10 50 Z" fill="url(#gTrash)"/><path d="M13 24 Q25 20 40 24 L40 28 Q25 24 13 30 Z" fill="#d0d0d0" opacity="0.45"/><path d="M24 22 L28 22 L22 46 L20 46 Z M31 22 L34 22 L26 46 L24 46 Z" fill="#e8e8e8" opacity="0.55"/><ellipse cx="27" cy="45" rx="16" ry="4.5" fill="#555" opacity="0.7"/><path d="M10 48 Q27 54 44 48 L43 53 Q27 58 11 53 Z" fill="#e2e2e2" stroke="#777" stroke-width="0.6"/><path d="M11 53 Q27 58 43 53 L42 57 Q27 62 12 57 Z" fill="#bdbdbd" stroke="#333" stroke-width="0.6"/><rect x="7" y="8" width="40" height="11" rx="5.5" fill="url(#gRim)" stroke="#9a9a9a" stroke-width="0.6"/><ellipse cx="27" cy="12" rx="16" ry="3" fill="#7a7a7a"/></svg>
<svg style="left:1180px;top:68px" width="64" height="66" viewBox="0 0 64 66"><defs><linearGradient id="gArr" x1="0" y1="0" x2="1" y2="0"><stop offset="0" stop-color="#9a9a9a"/><stop offset="1" stop-color="#2a2a2a"/></linearGradient><linearGradient id="gFc" x1="0" y1="0" x2="1" y2="0"><stop offset="0" stop-color="#c8c8c8"/><stop offset="1" stop-color="#a8a8a8"/></linearGradient></defs><path d="M16 6 L41 8 Q43 9 43 11 L43 64 L17 64 Z" fill="#b8b8b8"/><path d="M16 6 L30 6 L34 14 L36 64 L20 64 Z" fill="#f8f8f8"/><path d="M19 20 L34 20.5" stroke="#c4c4c4" stroke-width="0.6"/><path d="M19 23 L34 23.5" stroke="#c4c4c4" stroke-width="0.6"/><path d="M19 26 L34 26.5" stroke="#c4c4c4" stroke-width="0.6"/><path d="M19 29 L34 29.5" stroke="#c4c4c4" stroke-width="0.6"/><path d="M19 32 L34 32.5" stroke="#c4c4c4" stroke-width="0.6"/><path d="M19 35 L34 35.5" stroke="#c4c4c4" stroke-width="0.6"/><path d="M19 38 L34 38.5" stroke="#c4c4c4" stroke-width="0.6"/><path d="M19 41 L34 41.5" stroke="#c4c4c4" stroke-width="0.6"/><path d="M19 44 L34 44.5" stroke="#c4c4c4" stroke-width="0.6"/><path d="M19 47 L34 47.5" stroke="#c4c4c4" stroke-width="0.6"/><path d="M19 50 L34 50.5" stroke="#c4c4c4" stroke-width="0.6"/><path d="M19 53 L34 53.5" stroke="#c4c4c4" stroke-width="0.6"/><path d="M19 56 L34 56.5" stroke="#c4c4c4" stroke-width="0.6"/><path d="M19 59 L34 59.5" stroke="#c4c4c4" stroke-width="0.6"/><path d="M2 3 L17 10 Q19 12 19 14 L18 64 L2 55 Z" fill="url(#gFc)" stroke="#9a9a9a" stroke-width="0.5"/><ellipse cx="52" cy="53" rx="9" ry="2.5" fill="#f0f0f0"/><path d="M27 21 Q30 37 47 39 L47 49 L62 37 L47 25 L47 32 Q36 32 31 21 Z" fill="url(#gArr)" stroke="#222" stroke-width="0.5"/></svg>
<div style="left:326px;top:141px;width:1585px;height:1px;background:#d4d4d4;"></div>
<div style="left:1910px;top:141px;width:1px;height:822px;background:#dcdcdc;"></div>
<div style="left:327px;top:147px;width:64px;height:27px;background:#fff;border:1px solid #d9d9d9;border-bottom:none;"></div>
<div style="left:391px;top:150px;width:116px;height:24px;background:#f0f0f0;border:1px solid #d9d9d9;border-bottom:none;"></div>
<div style="left:507px;top:150px;width:119px;height:24px;background:#f0f0f0;border:1px solid #d9d9d9;border-bottom:none;"></div>
<div class="t " style="left:335px;top:149.46px;font-size:16px;line-height:22px;color:#000;letter-spacing:0.4px;">Tümü</div>
<div class="t " style="left:395px;top:150.61px;font-size:17px;line-height:23px;color:#000;letter-spacing:0px;">Mali Sorumlu</div>
<div class="t " style="left:513px;top:150.61px;font-size:17px;line-height:23px;color:#000;letter-spacing:0px;">Burak Kaplan</div>
<div style="left:1806px;top:148px;width:102px;height:24px;background:#e1e1e1;border:1px solid #adadad;"></div>
<div class="t " style="left:1816px;top:151.69px;font-size:11px;line-height:17px;color:#000;letter-spacing:0.5px;">Makbuz Yazdır</div>
<div style="left:327px;top:173px;width:1582px;height:560px;border:1px solid #a4a8ae;background:#fff;"></div>
<div style="left:342px;top:176px;width:69px;height:16px;background:#f0f0f0;border-right:1px solid #a0a0a0;border-bottom:1px solid #a0a0a0;box-shadow:inset -1px -1px 0 #fafafa;"></div>
<div class="t " style="left:343px;top:175.69px;font-size:11px;line-height:17px;color:#000;letter-spacing:0.6px;width:66px;text-align:left;overflow:hidden;">Fiş (A/B/C)</div>
<div style="left:413px;top:176px;width:115px;height:16px;background:#f0f0f0;border-right:1px solid #a0a0a0;border-bottom:1px solid #a0a0a0;box-shadow:inset -1px -1px 0 #fafafa;"></div>
<div class="t " style="left:414px;top:175.69px;font-size:11px;line-height:17px;color:#000;letter-spacing:0.6px;width:112px;text-align:left;overflow:hidden;">İşlenen Hesap</div>
<div style="left:530px;top:176px;width:103px;height:16px;background:#f0f0f0;border-right:1px solid #a0a0a0;border-bottom:1px solid #a0a0a0;box-shadow:inset -1px -1px 0 #fafafa;"></div>
<div class="t " style="left:531px;top:175.69px;font-size:11px;line-height:17px;color:#000;letter-spacing:0.6px;width:100px;text-align:left;overflow:hidden;">Kayıt Tarihi</div>
<div style="left:635px;top:176px;width:241px;height:16px;background:#f0f0f0;border-right:1px solid #a0a0a0;border-bottom:1px solid #a0a0a0;box-shadow:inset -1px -1px 0 #fafafa;"></div>
<div class="t " style="left:636px;top:175.69px;font-size:11px;line-height:17px;color:#000;letter-spacing:0.6px;width:238px;text-align:left;overflow:hidden;">Hesap Tarihi</div>
<div style="left:878px;top:176px;width:60px;height:16px;background:#f0f0f0;border-right:1px solid #a0a0a0;border-bottom:1px solid #a0a0a0;box-shadow:inset -1px -1px 0 #fafafa;"></div>
<div class="t " style="left:879px;top:175.69px;font-size:11px;line-height:17px;color:#000;letter-spacing:0.6px;width:57px;text-align:left;overflow:hidden;">Kodu</div>
<div style="left:940px;top:176px;width:184px;height:16px;background:#f0f0f0;border-right:1px solid #a0a0a0;border-bottom:1px solid #a0a0a0;box-shadow:inset -1px -1px 0 #fafafa;"></div>
<div class="t " style="left:941px;top:175.69px;font-size:11px;line-height:17px;color:#000;letter-spacing:0.6px;width:181px;text-align:left;overflow:hidden;">Tanımı</div>
<div style="left:1126px;top:176px;width:73px;height:16px;background:#f0f0f0;border-right:1px solid #a0a0a0;border-bottom:1px solid #a0a0a0;box-shadow:inset -1px -1px 0 #fafafa;"></div>
<div class="t " style="left:1127px;top:175.69px;font-size:11px;line-height:17px;color:#000;letter-spacing:0.6px;width:70px;text-align:left;overflow:hidden;">Tutar</div>
<div style="left:1201px;top:176px;width:72px;height:16px;background:#f0f0f0;border-right:1px solid #a0a0a0;border-bottom:1px solid #a0a0a0;box-shadow:inset -1px -1px 0 #fafafa;"></div>
<div class="t " style="left:1202px;top:175.69px;font-size:11px;line-height:17px;color:#000;letter-spacing:0.6px;width:69px;text-align:left;overflow:hidden;">Döviz Birimi</div>
<div style="left:1275px;top:176px;width:75px;height:16px;background:#f0f0f0;border-right:1px solid #a0a0a0;border-bottom:1px solid #a0a0a0;box-shadow:inset -1px -1px 0 #fafafa;"></div>
<div class="t " style="left:1276px;top:175.69px;font-size:11px;line-height:17px;color:#000;letter-spacing:0.6px;width:72px;text-align:left;overflow:hidden;">KPB Tutar</div>
<div style="left:1352px;top:176px;width:46px;height:16px;background:#f0f0f0;border-right:1px solid #a0a0a0;border-bottom:1px solid #a0a0a0;box-shadow:inset -1px -1px 0 #fafafa;"></div>
<div class="t " style="left:1353px;top:175.69px;font-size:11px;line-height:17px;color:#000;letter-spacing:0.6px;width:43px;text-align:left;overflow:hidden;">KPB</div>
<div style="left:1400px;top:176px;width:73px;height:16px;background:#f0f0f0;border-right:1px solid #a0a0a0;border-bottom:1px solid #a0a0a0;box-shadow:inset -1px -1px 0 #fafafa;"></div>
<div class="t " style="left:1401px;top:175.69px;font-size:11px;line-height:17px;color:#000;letter-spacing:0.6px;width:70px;text-align:left;overflow:hidden;">Kur</div>
<div style="left:1475px;top:176px;width:199px;height:16px;background:#f0f0f0;border-right:1px solid #a0a0a0;border-bottom:1px solid #a0a0a0;box-shadow:inset -1px -1px 0 #fafafa;"></div>
<div class="t " style="left:1476px;top:175.69px;font-size:11px;line-height:17px;color:#000;letter-spacing:0.6px;width:196px;text-align:left;overflow:hidden;">Açıklama</div>
<div style="left:1676px;top:176px;width:199px;height:16px;background:#f0f0f0;border-right:1px solid #a0a0a0;border-bottom:1px solid #a0a0a0;box-shadow:inset -1px -1px 0 #fafafa;"></div>
<div class="t " style="left:1677px;top:175.69px;font-size:11px;line-height:17px;color:#000;letter-spacing:0.6px;width:196px;text-align:left;overflow:hidden;">Sistem Açıklama</div>
<div style="left:1877px;top:176px;width:14px;height:16px;background:#f0f0f0;border-bottom:1px solid #a0a0a0;box-shadow:inset 0 -1px 0 #fafafa;"></div>
<div class="t " style="left:1878px;top:175.69px;font-size:11px;line-height:17px;color:#000;letter-spacing:0.6px;width:11px;text-align:left;overflow:hidden;">Ka</div>
<svg style="left:330px;top:180px" width="10" height="9"><rect x="1" y="1" width="1.8" height="1.8" fill="#222"/><rect x="6" y="1" width="1.8" height="1.8" fill="#222"/><rect x="1" y="6" width="1.8" height="1.8" fill="#222"/><rect x="6" y="6" width="1.8" height="1.8" fill="#222"/></svg>
<div style="left:329px;top:192px;width:11px;height:1px;background:#dcdcdc;"></div>
<div style="left:341px;top:192px;width:1550px;height:1px;background:#f2f2f2;"></div>
<div style="left:341px;top:193px;width:70px;height:17px;background:#d0e8fd;"></div>
<div class="t " style="left:343px;top:193.69px;font-size:11px;line-height:17px;color:#000;letter-spacing:0.15px;width:68px;text-align:left;overflow:hidden;">Fiş (B)</div>
<div style="left:412px;top:193px;width:116px;height:17px;background:#f0f0f0;"></div>
<div class="t " style="left:414px;top:193.69px;font-size:11px;line-height:17px;color:#000;letter-spacing:0.58px;width:114px;text-align:left;overflow:hidden;">Mali Sorumlu</div>
<div style="left:529px;top:193px;width:104px;height:17px;background:#d0e8fd;"></div>
<div class="t " style="left:531px;top:193.69px;font-size:11px;line-height:17px;color:#000;letter-spacing:0.6px;width:102px;text-align:left;overflow:hidden;">16.02.2026 12:08:18</div>
<div style="left:634px;top:193px;width:242px;height:17px;background:#d0e8fd;"></div>
<div class="t " style="left:636px;top:193.69px;font-size:11px;line-height:17px;color:#000;letter-spacing:0.6px;width:240px;text-align:left;overflow:hidden;">28.01.2026 12:08:18</div>
<div style="left:877px;top:193px;width:61px;height:17px;background:#d0e8fd;"></div>
<div class="t " style="left:877px;top:193.69px;font-size:11px;line-height:17px;color:#000;letter-spacing:0.6px;width:59px;text-align:right;overflow:hidden;">100</div>
<div style="left:939px;top:193px;width:185px;height:17px;background:#d0e8fd;"></div>
<div class="t " style="left:941px;top:193.69px;font-size:11px;line-height:17px;color:#000;letter-spacing:0.58px;width:183px;text-align:left;overflow:hidden;">Oda Ücreti</div>
<div style="left:1125px;top:193px;width:74px;height:17px;background:#d0e8fd;"></div>
<div class="t " style="left:1125px;top:193.69px;font-size:11px;line-height:17px;color:#000;letter-spacing:0.6px;width:72px;text-align:right;overflow:hidden;">3.500,00</div>
<div style="left:1200px;top:193px;width:73px;height:17px;background:#d0e8fd;"></div>
<div class="t " style="left:1202px;top:193.69px;font-size:11px;line-height:17px;color:#000;letter-spacing:0.58px;width:71px;text-align:left;overflow:hidden;">TL</div>
<div style="left:1274px;top:193px;width:76px;height:17px;background:#d0e8fd;"></div>
<div class="t " style="left:1274px;top:193.69px;font-size:11px;line-height:17px;color:#000;letter-spacing:0.6px;width:74px;text-align:right;overflow:hidden;">3.500,00</div>
<div style="left:1351px;top:193px;width:47px;height:17px;background:#d0e8fd;"></div>
<div class="t " style="left:1353px;top:193.69px;font-size:11px;line-height:17px;color:#000;letter-spacing:0.58px;width:45px;text-align:left;overflow:hidden;">TL</div>
<div style="left:1399px;top:193px;width:74px;height:17px;background:#d0e8fd;"></div>
<div class="t " style="left:1399px;top:193.69px;font-size:11px;line-height:17px;color:#000;letter-spacing:0.6px;width:72px;text-align:right;overflow:hidden;">1,0000</div>
<div style="left:1474px;top:193px;width:200px;height:17px;background:#d0e8fd;"></div>
<div style="left:1675px;top:193px;width:200px;height:17px;background:#d0e8fd;"></div>
<div class="t " style="left:1677px;top:193.69px;font-size:11px;line-height:17px;color:#000;letter-spacing:0.45px;width:198px;text-align:left;overflow:hidden;">Otomatik Eklenen Konaklama Ücreti</div>
<div style="left:1876px;top:193px;width:15px;height:17px;background:#d0e8fd;"></div>
<div class="t " style="left:1878px;top:193.69px;font-size:11px;line-height:17px;color:#000;letter-spacing:0.58px;width:13px;text-align:left;overflow:hidden;">SYS</div>
<div style="left:329px;top:210px;width:11px;height:1px;background:#dcdcdc;"></div>
<div style="left:341px;top:210px;width:1550px;height:1px;background:#f2f2f2;"></div>
<div style="left:341px;top:211px;width:70px;height:17px;background:#fff;"></div>
<div class="t " style="left:343px;top:211.69px;font-size:11px;line-height:17px;color:#000;letter-spacing:0.15px;width:68px;text-align:left;overflow:hidden;">Fiş (B)</div>
<div style="left:412px;top:211px;width:116px;height:17px;background:#f0f0f0;"></div>
<div class="t " style="left:414px;top:211.69px;font-size:11px;line-height:17px;color:#000;letter-spacing:0.58px;width:114px;text-align:left;overflow:hidden;">Mali Sorumlu</div>
<div style="left:529px;top:211px;width:104px;height:17px;background:#fff;"></div>
<div class="t " style="left:531px;top:211.69px;font-size:11px;line-height:17px;color:#000;letter-spacing:0.6px;width:102px;text-align:left;overflow:hidden;">16.02.2026 12:08:18</div>
<div style="left:634px;top:211px;width:242px;height:17px;background:#fff;"></div>
<div class="t " style="left:636px;top:211.69px;font-size:11px;line-height:17px;color:#000;letter-spacing:0.6px;width:240px;text-align:left;overflow:hidden;">29.01.2026 12:08:18</div>
<div style="left:877px;top:211px;width:61px;height:17px;background:#fff;"></div>
<div class="t " style="left:877px;top:211.69px;font-size:11px;line-height:17px;color:#000;letter-spacing:0.6px;width:59px;text-align:right;overflow:hidden;">100</div>
<div style="left:939px;top:211px;width:185px;height:17px;background:#fff;"></div>
<div class="t " style="left:941px;top:211.69px;font-size:11px;line-height:17px;color:#000;letter-spacing:0.58px;width:183px;text-align:left;overflow:hidden;">Oda Ücreti</div>
<div style="left:1125px;top:211px;width:74px;height:17px;background:#fff;"></div>
<div class="t " style="left:1125px;top:211.69px;font-size:11px;line-height:17px;color:#000;letter-spacing:0.6px;width:72px;text-align:right;overflow:hidden;">3.500,00</div>
<div style="left:1200px;top:211px;width:73px;height:17px;background:#fff;"></div>
<div class="t " style="left:1202px;top:211.69px;font-size:11px;line-height:17px;color:#000;letter-spacing:0.58px;width:71px;text-align:left;overflow:hidden;">TL</div>
<div style="left:1274px;top:211px;width:76px;height:17px;background:#fff;"></div>
<div class="t " style="left:1274px;top:211.69px;font-size:11px;line-height:17px;color:#000;letter-spacing:0.6px;width:74px;text-align:right;overflow:hidden;">3.500,00</div>
<div style="left:1351px;top:211px;width:47px;height:17px;background:#fff;"></div>
<div class="t " style="left:1353px;top:211.69px;font-size:11px;line-height:17px;color:#000;letter-spacing:0.58px;width:45px;text-align:left;overflow:hidden;">TL</div>
<div style="left:1399px;top:211px;width:74px;height:17px;background:#fff;"></div>
<div class="t " style="left:1399px;top:211.69px;font-size:11px;line-height:17px;color:#000;letter-spacing:0.6px;width:72px;text-align:right;overflow:hidden;">1,0000</div>
<div style="left:1474px;top:211px;width:200px;height:17px;background:#fff;"></div>
<div style="left:1675px;top:211px;width:200px;height:17px;background:#fff;"></div>
<div class="t " style="left:1677px;top:211.69px;font-size:11px;line-height:17px;color:#000;letter-spacing:0.45px;width:198px;text-align:left;overflow:hidden;">Otomatik Eklenen Konaklama Ücreti</div>
<div style="left:1876px;top:211px;width:15px;height:17px;background:#fff;"></div>
<div class="t " style="left:1878px;top:211.69px;font-size:11px;line-height:17px;color:#000;letter-spacing:0.58px;width:13px;text-align:left;overflow:hidden;">SYS</div>
<div style="left:329px;top:228px;width:11px;height:1px;background:#dcdcdc;"></div>
<div style="left:341px;top:228px;width:1550px;height:1px;background:#f2f2f2;"></div>
<div style="left:341px;top:229px;width:70px;height:17px;background:#d0e8fd;"></div>
<div class="t " style="left:343px;top:229.69px;font-size:11px;line-height:17px;color:#000;letter-spacing:0.15px;width:68px;text-align:left;overflow:hidden;">Fiş (B)</div>
<div style="left:412px;top:229px;width:116px;height:17px;background:#f0f0f0;"></div>
<div class="t " style="left:414px;top:229.69px;font-size:11px;line-height:17px;color:#000;letter-spacing:0.58px;width:114px;text-align:left;overflow:hidden;">Mali Sorumlu</div>
<div style="left:529px;top:229px;width:104px;height:17px;background:#d0e8fd;"></div>
<div class="t " style="left:531px;top:229.69px;font-size:11px;line-height:17px;color:#000;letter-spacing:0.6px;width:102px;text-align:left;overflow:hidden;">16.02.2026 12:08:18</div>
<div style="left:634px;top:229px;width:242px;height:17px;background:#d0e8fd;"></div>
<div class="t " style="left:636px;top:229.69px;font-size:11px;line-height:17px;color:#000;letter-spacing:0.6px;width:240px;text-align:left;overflow:hidden;">30.01.2026 12:08:18</div>
<div style="left:877px;top:229px;width:61px;height:17px;background:#d0e8fd;"></div>
<div class="t " style="left:877px;top:229.69px;font-size:11px;line-height:17px;color:#000;letter-spacing:0.6px;width:59px;text-align:right;overflow:hidden;">100</div>
<div style="left:939px;top:229px;width:185px;height:17px;background:#d0e8fd;"></div>
<div class="t " style="left:941px;top:229.69px;font-size:11px;line-height:17px;color:#000;letter-spacing:0.58px;width:183px;text-align:left;overflow:hidden;">Oda Ücreti</div>
<div style="left:1125px;top:229px;width:74px;height:17px;background:#d0e8fd;"></div>
<div class="t " style="left:1125px;top:229.69px;font-size:11px;line-height:17px;color:#000;letter-spacing:0.6px;width:72px;text-align:right;overflow:hidden;">3.500,00</div>
<div style="left:1200px;top:229px;width:73px;height:17px;background:#d0e8fd;"></div>
<div class="t " style="left:1202px;top:229.69px;font-size:11px;line-height:17px;color:#000;letter-spacing:0.58px;width:71px;text-align:left;overflow:hidden;">TL</div>
<div style="left:1274px;top:229px;width:76px;height:17px;background:#d0e8fd;"></div>
<div class="t " style="left:1274px;top:229.69px;font-size:11px;line-height:17px;color:#000;letter-spacing:0.6px;width:74px;text-align:right;overflow:hidden;">3.500,00</div>
<div style="left:1351px;top:229px;width:47px;height:17px;background:#d0e8fd;"></div>
<div class="t " style="left:1353px;top:229.69px;font-size:11px;line-height:17px;color:#000;letter-spacing:0.58px;width:45px;text-align:left;overflow:hidden;">TL</div>
<div style="left:1399px;top:229px;width:74px;height:17px;background:#d0e8fd;"></div>
<div class="t " style="left:1399px;top:229.69px;font-size:11px;line-height:17px;color:#000;letter-spacing:0.6px;width:72px;text-align:right;overflow:hidden;">1,0000</div>
<div style="left:1474px;top:229px;width:200px;height:17px;background:#d0e8fd;"></div>
<div style="left:1675px;top:229px;width:200px;height:17px;background:#d0e8fd;"></div>
<div class="t " style="left:1677px;top:229.69px;font-size:11px;line-height:17px;color:#000;letter-spacing:0.45px;width:198px;text-align:left;overflow:hidden;">Otomatik Eklenen Konaklama Ücreti</div>
<div style="left:1876px;top:229px;width:15px;height:17px;background:#d0e8fd;"></div>
<div class="t " style="left:1878px;top:229.69px;font-size:11px;line-height:17px;color:#000;letter-spacing:0.58px;width:13px;text-align:left;overflow:hidden;">SYS</div>
<div style="left:329px;top:246px;width:11px;height:1px;background:#dcdcdc;"></div>
<div style="left:341px;top:246px;width:1550px;height:1px;background:#f2f2f2;"></div>
<div style="left:341px;top:247px;width:70px;height:17px;background:#fff;"></div>
<div class="t " style="left:343px;top:247.69px;font-size:11px;line-height:17px;color:#000;letter-spacing:0.15px;width:68px;text-align:left;overflow:hidden;">Fiş (B)</div>
<div style="left:412px;top:247px;width:116px;height:17px;background:#f0f0f0;"></div>
<div class="t " style="left:414px;top:247.69px;font-size:11px;line-height:17px;color:#000;letter-spacing:0.58px;width:114px;text-align:left;overflow:hidden;">Mali Sorumlu</div>
<div style="left:529px;top:247px;width:104px;height:17px;background:#fff;"></div>
<div class="t " style="left:531px;top:247.69px;font-size:11px;line-height:17px;color:#000;letter-spacing:0.6px;width:102px;text-align:left;overflow:hidden;">16.02.2026 12:08:18</div>
<div style="left:634px;top:247px;width:242px;height:17px;background:#fff;"></div>
<div class="t " style="left:636px;top:247.69px;font-size:11px;line-height:17px;color:#000;letter-spacing:0.6px;width:240px;text-align:left;overflow:hidden;">31.01.2026 12:08:18</div>
<div style="left:877px;top:247px;width:61px;height:17px;background:#fff;"></div>
<div class="t " style="left:877px;top:247.69px;font-size:11px;line-height:17px;color:#000;letter-spacing:0.6px;width:59px;text-align:right;overflow:hidden;">100</div>
<div style="left:939px;top:247px;width:185px;height:17px;background:#fff;"></div>
<div class="t " style="left:941px;top:247.69px;font-size:11px;line-height:17px;color:#000;letter-spacing:0.58px;width:183px;text-align:left;overflow:hidden;">Oda Ücreti</div>
<div style="left:1125px;top:247px;width:74px;height:17px;background:#fff;"></div>
<div class="t " style="left:1125px;top:247.69px;font-size:11px;line-height:17px;color:#000;letter-spacing:0.6px;width:72px;text-align:right;overflow:hidden;">3.500,00</div>
<div style="left:1200px;top:247px;width:73px;height:17px;background:#fff;"></div>
<div class="t " style="left:1202px;top:247.69px;font-size:11px;line-height:17px;color:#000;letter-spacing:0.58px;width:71px;text-align:left;overflow:hidden;">TL</div>
<div style="left:1274px;top:247px;width:76px;height:17px;background:#fff;"></div>
<div class="t " style="left:1274px;top:247.69px;font-size:11px;line-height:17px;color:#000;letter-spacing:0.6px;width:74px;text-align:right;overflow:hidden;">3.500,00</div>
<div style="left:1351px;top:247px;width:47px;height:17px;background:#fff;"></div>
<div class="t " style="left:1353px;top:247.69px;font-size:11px;line-height:17px;color:#000;letter-spacing:0.58px;width:45px;text-align:left;overflow:hidden;">TL</div>
<div style="left:1399px;top:247px;width:74px;height:17px;background:#fff;"></div>
<div class="t " style="left:1399px;top:247.69px;font-size:11px;line-height:17px;color:#000;letter-spacing:0.6px;width:72px;text-align:right;overflow:hidden;">1,0000</div>
<div style="left:1474px;top:247px;width:200px;height:17px;background:#fff;"></div>
<div style="left:1675px;top:247px;width:200px;height:17px;background:#fff;"></div>
<div class="t " style="left:1677px;top:247.69px;font-size:11px;line-height:17px;color:#000;letter-spacing:0.45px;width:198px;text-align:left;overflow:hidden;">Otomatik Eklenen Konaklama Ücreti</div>
<div style="left:1876px;top:247px;width:15px;height:17px;background:#fff;"></div>
<div class="t " style="left:1878px;top:247.69px;font-size:11px;line-height:17px;color:#000;letter-spacing:0.58px;width:13px;text-align:left;overflow:hidden;">SYS</div>
<div style="left:329px;top:264px;width:11px;height:1px;background:#dcdcdc;"></div>
<div style="left:341px;top:264px;width:1550px;height:1px;background:#f2f2f2;"></div>
<div style="left:341px;top:265px;width:70px;height:17px;background:#d0e8fd;"></div>
<div class="t " style="left:343px;top:265.69px;font-size:11px;line-height:17px;color:#000;letter-spacing:0.15px;width:68px;text-align:left;overflow:hidden;">Fiş (B)</div>
<div style="left:412px;top:265px;width:116px;height:17px;background:#f0f0f0;"></div>
<div class="t " style="left:414px;top:265.69px;font-size:11px;line-height:17px;color:#000;letter-spacing:0.58px;width:114px;text-align:left;overflow:hidden;">Mali Sorumlu</div>
<div style="left:529px;top:265px;width:104px;height:17px;background:#d0e8fd;"></div>
<div class="t " style="left:531px;top:265.69px;font-size:11px;line-height:17px;color:#000;letter-spacing:0.6px;width:102px;text-align:left;overflow:hidden;">16.02.2026 12:08:18</div>
<div style="left:634px;top:265px;width:242px;height:17px;background:#d0e8fd;"></div>
<div class="t " style="left:636px;top:265.69px;font-size:11px;line-height:17px;color:#000;letter-spacing:0.6px;width:240px;text-align:left;overflow:hidden;">1.02.2026 12:08:18</div>
<div style="left:877px;top:265px;width:61px;height:17px;background:#d0e8fd;"></div>
<div class="t " style="left:877px;top:265.69px;font-size:11px;line-height:17px;color:#000;letter-spacing:0.6px;width:59px;text-align:right;overflow:hidden;">100</div>
<div style="left:939px;top:265px;width:185px;height:17px;background:#d0e8fd;"></div>
<div class="t " style="left:941px;top:265.69px;font-size:11px;line-height:17px;color:#000;letter-spacing:0.58px;width:183px;text-align:left;overflow:hidden;">Oda Ücreti</div>
<div style="left:1125px;top:265px;width:74px;height:17px;background:#d0e8fd;"></div>
<div class="t " style="left:1125px;top:265.69px;font-size:11px;line-height:17px;color:#000;letter-spacing:0.6px;width:72px;text-align:right;overflow:hidden;">3.500,00</div>
<div style="left:1200px;top:265px;width:73px;height:17px;background:#d0e8fd;"></div>
<div class="t " style="left:1202px;top:265.69px;font-size:11px;line-height:17px;color:#000;letter-spacing:0.58px;width:71px;text-align:left;overflow:hidden;">TL</div>
<div style="left:1274px;top:265px;width:76px;height:17px;background:#d0e8fd;"></div>
<div class="t " style="left:1274px;top:265.69px;font-size:11px;line-height:17px;color:#000;letter-spacing:0.6px;width:74px;text-align:right;overflow:hidden;">3.500,00</div>
<div style="left:1351px;top:265px;width:47px;height:17px;background:#d0e8fd;"></div>
<div class="t " style="left:1353px;top:265.69px;font-size:11px;line-height:17px;color:#000;letter-spacing:0.58px;width:45px;text-align:left;overflow:hidden;">TL</div>
<div style="left:1399px;top:265px;width:74px;height:17px;background:#d0e8fd;"></div>
<div class="t " style="left:1399px;top:265.69px;font-size:11px;line-height:17px;color:#000;letter-spacing:0.6px;width:72px;text-align:right;overflow:hidden;">1,0000</div>
<div style="left:1474px;top:265px;width:200px;height:17px;background:#d0e8fd;"></div>
<div style="left:1675px;top:265px;width:200px;height:17px;background:#d0e8fd;"></div>
<div class="t " style="left:1677px;top:265.69px;font-size:11px;line-height:17px;color:#000;letter-spacing:0.45px;width:198px;text-align:left;overflow:hidden;">Otomatik Eklenen Konaklama Ücreti</div>
<div style="left:1876px;top:265px;width:15px;height:17px;background:#d0e8fd;"></div>
<div class="t " style="left:1878px;top:265.69px;font-size:11px;line-height:17px;color:#000;letter-spacing:0.58px;width:13px;text-align:left;overflow:hidden;">SYS</div>
<div style="left:329px;top:282px;width:11px;height:1px;background:#dcdcdc;"></div>
<div style="left:341px;top:282px;width:1550px;height:1px;background:#f2f2f2;"></div>
<div style="left:341px;top:283px;width:70px;height:17px;background:#fff;"></div>
<div class="t " style="left:343px;top:283.69px;font-size:11px;line-height:17px;color:#000;letter-spacing:0.15px;width:68px;text-align:left;overflow:hidden;">Fiş (A)</div>
<div style="left:412px;top:283px;width:116px;height:17px;background:#f0f0f0;"></div>
<div class="t " style="left:414px;top:283.69px;font-size:11px;line-height:17px;color:#000;letter-spacing:0.58px;width:114px;text-align:left;overflow:hidden;">Burak Kaplan</div>
<div style="left:529px;top:283px;width:104px;height:17px;background:#fff;"></div>
<div class="t " style="left:531px;top:283.69px;font-size:11px;line-height:17px;color:#000;letter-spacing:0.6px;width:102px;text-align:left;overflow:hidden;">2.02.2026 08:47:00</div>
<div style="left:634px;top:283px;width:242px;height:17px;background:#fff;"></div>
<div class="t " style="left:636px;top:283.69px;font-size:11px;line-height:17px;color:#000;letter-spacing:0.6px;width:240px;text-align:left;overflow:hidden;">2.02.2026 08:47:00</div>
<div style="left:877px;top:283px;width:61px;height:17px;background:#fff;"></div>
<div class="t " style="left:877px;top:283.69px;font-size:11px;line-height:17px;color:#000;letter-spacing:0.6px;width:59px;text-align:right;overflow:hidden;">502</div>
<div style="left:939px;top:283px;width:185px;height:17px;background:#fff;"></div>
<div class="t " style="left:941px;top:283.69px;font-size:11px;line-height:17px;color:#000;letter-spacing:0.58px;width:183px;text-align:left;overflow:hidden;">Alkollü İçecekler</div>
<div style="left:1125px;top:283px;width:74px;height:17px;background:#fff;"></div>
<div class="t " style="left:1125px;top:283.69px;font-size:11px;line-height:17px;color:#000;letter-spacing:0.6px;width:72px;text-align:right;overflow:hidden;">200,00</div>
<div style="left:1200px;top:283px;width:73px;height:17px;background:#fff;"></div>
<div class="t " style="left:1202px;top:283.69px;font-size:11px;line-height:17px;color:#000;letter-spacing:0.58px;width:71px;text-align:left;overflow:hidden;">TL</div>
<div style="left:1274px;top:283px;width:76px;height:17px;background:#fff;"></div>
<div class="t " style="left:1274px;top:283.69px;font-size:11px;line-height:17px;color:#000;letter-spacing:0.6px;width:74px;text-align:right;overflow:hidden;">200,00</div>
<div style="left:1351px;top:283px;width:47px;height:17px;background:#fff;"></div>
<div class="t " style="left:1353px;top:283.69px;font-size:11px;line-height:17px;color:#000;letter-spacing:0.58px;width:45px;text-align:left;overflow:hidden;">TL</div>
<div style="left:1399px;top:283px;width:74px;height:17px;background:#fff;"></div>
<div class="t " style="left:1399px;top:283.69px;font-size:11px;line-height:17px;color:#000;letter-spacing:0.6px;width:72px;text-align:right;overflow:hidden;">1,0000</div>
<div style="left:1474px;top:283px;width:200px;height:17px;background:#fff;"></div>
<div style="left:1675px;top:283px;width:200px;height:17px;background:#fff;"></div>
<div style="left:1876px;top:283px;width:15px;height:17px;background:#fff;"></div>
<div class="t " style="left:1878px;top:283.69px;font-size:11px;line-height:17px;color:#000;letter-spacing:0.58px;width:13px;text-align:left;overflow:hidden;">SYS</div>
<div style="left:329px;top:300px;width:11px;height:1px;background:#dcdcdc;"></div>
<div style="left:341px;top:300px;width:1550px;height:1px;background:#f2f2f2;"></div>
<div style="left:341px;top:301px;width:70px;height:17px;background:#d0e8fd;"></div>
<div class="t " style="left:343px;top:301.69px;font-size:11px;line-height:17px;color:#000;letter-spacing:0.15px;width:68px;text-align:left;overflow:hidden;">Fiş (C)</div>
<div style="left:412px;top:301px;width:116px;height:17px;background:#f0f0f0;"></div>
<div class="t " style="left:414px;top:301.69px;font-size:11px;line-height:17px;color:#000;letter-spacing:0.58px;width:114px;text-align:left;overflow:hidden;">Mali Sorumlu</div>
<div style="left:529px;top:301px;width:104px;height:17px;background:#d0e8fd;"></div>
<div class="t " style="left:531px;top:301.69px;font-size:11px;line-height:17px;color:#000;letter-spacing:0.6px;width:102px;text-align:left;overflow:hidden;">2.02.2026 08:45:00</div>
<div style="left:634px;top:301px;width:242px;height:17px;background:#d0e8fd;"></div>
<div class="t " style="left:636px;top:301.69px;font-size:11px;line-height:17px;color:#000;letter-spacing:0.6px;width:240px;text-align:left;overflow:hidden;">2.02.2026 08:45:00</div>
<div style="left:877px;top:301px;width:61px;height:17px;background:#d0e8fd;"></div>
<div class="t " style="left:877px;top:301.69px;font-size:11px;line-height:17px;color:#000;letter-spacing:0.6px;width:59px;text-align:right;overflow:hidden;">131</div>
<div style="left:939px;top:301px;width:185px;height:17px;background:#d0e8fd;"></div>
<div class="t " style="left:941px;top:301.69px;font-size:11px;line-height:17px;color:#000;letter-spacing:0.58px;width:183px;text-align:left;overflow:hidden;">İnternet Ücreti</div>
<div style="left:1125px;top:301px;width:74px;height:17px;background:#d0e8fd;"></div>
<div class="t " style="left:1125px;top:301.69px;font-size:11px;line-height:17px;color:#000;letter-spacing:0.6px;width:72px;text-align:right;overflow:hidden;">400,00</div>
<div style="left:1200px;top:301px;width:73px;height:17px;background:#d0e8fd;"></div>
<div class="t " style="left:1202px;top:301.69px;font-size:11px;line-height:17px;color:#000;letter-spacing:0.58px;width:71px;text-align:left;overflow:hidden;">TL</div>
<div style="left:1274px;top:301px;width:76px;height:17px;background:#d0e8fd;"></div>
<div class="t " style="left:1274px;top:301.69px;font-size:11px;line-height:17px;color:#000;letter-spacing:0.6px;width:74px;text-align:right;overflow:hidden;">400,00</div>
<div style="left:1351px;top:301px;width:47px;height:17px;background:#d0e8fd;"></div>
<div class="t " style="left:1353px;top:301.69px;font-size:11px;line-height:17px;color:#000;letter-spacing:0.58px;width:45px;text-align:left;overflow:hidden;">TL</div>
<div style="left:1399px;top:301px;width:74px;height:17px;background:#d0e8fd;"></div>
<div class="t " style="left:1399px;top:301.69px;font-size:11px;line-height:17px;color:#000;letter-spacing:0.6px;width:72px;text-align:right;overflow:hidden;">1,0000</div>
<div style="left:1474px;top:301px;width:200px;height:17px;background:#d0e8fd;"></div>
<div style="left:1675px;top:301px;width:200px;height:17px;background:#d0e8fd;"></div>
<div style="left:1876px;top:301px;width:15px;height:17px;background:#d0e8fd;"></div>
<div class="t " style="left:1878px;top:301.69px;font-size:11px;line-height:17px;color:#000;letter-spacing:0.58px;width:13px;text-align:left;overflow:hidden;">SYS</div>
<div style="left:329px;top:318px;width:11px;height:1px;background:#dcdcdc;"></div>
<div style="left:341px;top:318px;width:1550px;height:1px;background:#f2f2f2;"></div>
<div style="left:341px;top:319px;width:70px;height:17px;background:#fff;"></div>
<div class="t " style="left:343px;top:319.69px;font-size:11px;line-height:17px;color:#000;letter-spacing:0.15px;width:68px;text-align:left;overflow:hidden;">Fiş (B)</div>
<div style="left:412px;top:319px;width:116px;height:17px;background:#f0f0f0;"></div>
<div class="t " style="left:414px;top:319.69px;font-size:11px;line-height:17px;color:#000;letter-spacing:0.58px;width:114px;text-align:left;overflow:hidden;">Mali Sorumlu</div>
<div style="left:529px;top:319px;width:104px;height:17px;background:#fff;"></div>
<div class="t " style="left:531px;top:319.69px;font-size:11px;line-height:17px;color:#000;letter-spacing:0.6px;width:102px;text-align:left;overflow:hidden;">28.01.2026 17:16:41</div>
<div style="left:634px;top:319px;width:242px;height:17px;background:#fff;"></div>
<div class="t " style="left:636px;top:319.69px;font-size:11px;line-height:17px;color:#000;letter-spacing:0.6px;width:240px;text-align:left;overflow:hidden;">15.01.2026 17:16:41</div>
<div style="left:877px;top:319px;width:61px;height:17px;background:#fff;"></div>
<div class="t " style="left:877px;top:319.69px;font-size:11px;line-height:17px;color:#000;letter-spacing:0.6px;width:59px;text-align:right;overflow:hidden;">100</div>
<div style="left:939px;top:319px;width:185px;height:17px;background:#fff;"></div>
<div class="t " style="left:941px;top:319.69px;font-size:11px;line-height:17px;color:#000;letter-spacing:0.58px;width:183px;text-align:left;overflow:hidden;">Oda Ücreti</div>
<div style="left:1125px;top:319px;width:74px;height:17px;background:#fff;"></div>
<div class="t " style="left:1125px;top:319.69px;font-size:11px;line-height:17px;color:#000;letter-spacing:0.6px;width:72px;text-align:right;overflow:hidden;">3.500,00</div>
<div style="left:1200px;top:319px;width:73px;height:17px;background:#fff;"></div>
<div class="t " style="left:1202px;top:319.69px;font-size:11px;line-height:17px;color:#000;letter-spacing:0.58px;width:71px;text-align:left;overflow:hidden;">TL</div>
<div style="left:1274px;top:319px;width:76px;height:17px;background:#fff;"></div>
<div class="t " style="left:1274px;top:319.69px;font-size:11px;line-height:17px;color:#000;letter-spacing:0.6px;width:74px;text-align:right;overflow:hidden;">3.500,00</div>
<div style="left:1351px;top:319px;width:47px;height:17px;background:#fff;"></div>
<div class="t " style="left:1353px;top:319.69px;font-size:11px;line-height:17px;color:#000;letter-spacing:0.58px;width:45px;text-align:left;overflow:hidden;">TL</div>
<div style="left:1399px;top:319px;width:74px;height:17px;background:#fff;"></div>
<div class="t " style="left:1399px;top:319.69px;font-size:11px;line-height:17px;color:#000;letter-spacing:0.6px;width:72px;text-align:right;overflow:hidden;">1,0000</div>
<div style="left:1474px;top:319px;width:200px;height:17px;background:#fff;"></div>
<div style="left:1675px;top:319px;width:200px;height:17px;background:#fff;"></div>
<div class="t " style="left:1677px;top:319.69px;font-size:11px;line-height:17px;color:#000;letter-spacing:0.45px;width:198px;text-align:left;overflow:hidden;">Otomatik Eklenen Konaklama Ücreti</div>
<div style="left:1876px;top:319px;width:15px;height:17px;background:#fff;"></div>
<div class="t " style="left:1878px;top:319.69px;font-size:11px;line-height:17px;color:#000;letter-spacing:0.58px;width:13px;text-align:left;overflow:hidden;">SYS</div>
<div style="left:329px;top:336px;width:11px;height:1px;background:#dcdcdc;"></div>
<div style="left:341px;top:336px;width:1550px;height:1px;background:#f2f2f2;"></div>
<div style="left:341px;top:337px;width:70px;height:17px;background:#d0e8fd;"></div>
<div class="t " style="left:343px;top:337.69px;font-size:11px;line-height:17px;color:#000;letter-spacing:0.15px;width:68px;text-align:left;overflow:hidden;">Fiş (B)</div>
<div style="left:412px;top:337px;width:116px;height:17px;background:#f0f0f0;"></div>
<div class="t " style="left:414px;top:337.69px;font-size:11px;line-height:17px;color:#000;letter-spacing:0.58px;width:114px;text-align:left;overflow:hidden;">Mali Sorumlu</div>
<div style="left:529px;top:337px;width:104px;height:17px;background:#d0e8fd;"></div>
<div class="t " style="left:531px;top:337.69px;font-size:11px;line-height:17px;color:#000;letter-spacing:0.6px;width:102px;text-align:left;overflow:hidden;">28.01.2026 17:16:41</div>
<div style="left:634px;top:337px;width:242px;height:17px;background:#d0e8fd;"></div>
<div class="t " style="left:636px;top:337.69px;font-size:11px;line-height:17px;color:#000;letter-spacing:0.6px;width:240px;text-align:left;overflow:hidden;">16.01.2026 17:16:41</div>
<div style="left:877px;top:337px;width:61px;height:17px;background:#d0e8fd;"></div>
<div class="t " style="left:877px;top:337.69px;font-size:11px;line-height:17px;color:#000;letter-spacing:0.6px;width:59px;text-align:right;overflow:hidden;">100</div>
<div style="left:939px;top:337px;width:185px;height:17px;background:#d0e8fd;"></div>
<div class="t " style="left:941px;top:337.69px;font-size:11px;line-height:17px;color:#000;letter-spacing:0.58px;width:183px;text-align:left;overflow:hidden;">Oda Ücreti</div>
<div style="left:1125px;top:337px;width:74px;height:17px;background:#d0e8fd;"></div>
<div class="t " style="left:1125px;top:337.69px;font-size:11px;line-height:17px;color:#000;letter-spacing:0.6px;width:72px;text-align:right;overflow:hidden;">3.500,00</div>
<div style="left:1200px;top:337px;width:73px;height:17px;background:#d0e8fd;"></div>
<div class="t " style="left:1202px;top:337.69px;font-size:11px;line-height:17px;color:#000;letter-spacing:0.58px;width:71px;text-align:left;overflow:hidden;">TL</div>
<div style="left:1274px;top:337px;width:76px;height:17px;background:#d0e8fd;"></div>
<div class="t " style="left:1274px;top:337.69px;font-size:11px;line-height:17px;color:#000;letter-spacing:0.6px;width:74px;text-align:right;overflow:hidden;">3.500,00</div>
<div style="left:1351px;top:337px;width:47px;height:17px;background:#d0e8fd;"></div>
<div class="t " style="left:1353px;top:337.69px;font-size:11px;line-height:17px;color:#000;letter-spacing:0.58px;width:45px;text-align:left;overflow:hidden;">TL</div>
<div style="left:1399px;top:337px;width:74px;height:17px;background:#d0e8fd;"></div>
<div class="t " style="left:1399px;top:337.69px;font-size:11px;line-height:17px;color:#000;letter-spacing:0.6px;width:72px;text-align:right;overflow:hidden;">1,0000</div>
<div style="left:1474px;top:337px;width:200px;height:17px;background:#d0e8fd;"></div>
<div style="left:1675px;top:337px;width:200px;height:17px;background:#d0e8fd;"></div>
<div class="t " style="left:1677px;top:337.69px;font-size:11px;line-height:17px;color:#000;letter-spacing:0.45px;width:198px;text-align:left;overflow:hidden;">Otomatik Eklenen Konaklama Ücreti</div>
<div style="left:1876px;top:337px;width:15px;height:17px;background:#d0e8fd;"></div>
<div class="t " style="left:1878px;top:337.69px;font-size:11px;line-height:17px;color:#000;letter-spacing:0.58px;width:13px;text-align:left;overflow:hidden;">SYS</div>
<div style="left:329px;top:354px;width:11px;height:1px;background:#dcdcdc;"></div>
<div style="left:341px;top:354px;width:1550px;height:1px;background:#f2f2f2;"></div>
<div style="left:341px;top:355px;width:70px;height:17px;background:#fff;"></div>
<div class="t " style="left:343px;top:355.69px;font-size:11px;line-height:17px;color:#000;letter-spacing:0.15px;width:68px;text-align:left;overflow:hidden;">Fiş (B)</div>
<div style="left:412px;top:355px;width:116px;height:17px;background:#f0f0f0;"></div>
<div class="t " style="left:414px;top:355.69px;font-size:11px;line-height:17px;color:#000;letter-spacing:0.58px;width:114px;text-align:left;overflow:hidden;">Mali Sorumlu</div>
<div style="left:529px;top:355px;width:104px;height:17px;background:#fff;"></div>
<div class="t " style="left:531px;top:355.69px;font-size:11px;line-height:17px;color:#000;letter-spacing:0.6px;width:102px;text-align:left;overflow:hidden;">28.01.2026 17:16:41</div>
<div style="left:634px;top:355px;width:242px;height:17px;background:#fff;"></div>
<div class="t " style="left:636px;top:355.69px;font-size:11px;line-height:17px;color:#000;letter-spacing:0.6px;width:240px;text-align:left;overflow:hidden;">17.01.2026 17:16:41</div>
<div style="left:877px;top:355px;width:61px;height:17px;background:#fff;"></div>
<div class="t " style="left:877px;top:355.69px;font-size:11px;line-height:17px;color:#000;letter-spacing:0.6px;width:59px;text-align:right;overflow:hidden;">100</div>
<div style="left:939px;top:355px;width:185px;height:17px;background:#fff;"></div>
<div class="t " style="left:941px;top:355.69px;font-size:11px;line-height:17px;color:#000;letter-spacing:0.58px;width:183px;text-align:left;overflow:hidden;">Oda Ücreti</div>
<div style="left:1125px;top:355px;width:74px;height:17px;background:#fff;"></div>
<div class="t " style="left:1125px;top:355.69px;font-size:11px;line-height:17px;color:#000;letter-spacing:0.6px;width:72px;text-align:right;overflow:hidden;">3.500,00</div>
<div style="left:1200px;top:355px;width:73px;height:17px;background:#fff;"></div>
<div class="t " style="left:1202px;top:355.69px;font-size:11px;line-height:17px;color:#000;letter-spacing:0.58px;width:71px;text-align:left;overflow:hidden;">TL</div>
<div style="left:1274px;top:355px;width:76px;height:17px;background:#fff;"></div>
<div class="t " style="left:1274px;top:355.69px;font-size:11px;line-height:17px;color:#000;letter-spacing:0.6px;width:74px;text-align:right;overflow:hidden;">3.500,00</div>
<div style="left:1351px;top:355px;width:47px;height:17px;background:#fff;"></div>
<div class="t " style="left:1353px;top:355.69px;font-size:11px;line-height:17px;color:#000;letter-spacing:0.58px;width:45px;text-align:left;overflow:hidden;">TL</div>
<div style="left:1399px;top:355px;width:74px;height:17px;background:#fff;"></div>
<div class="t " style="left:1399px;top:355.69px;font-size:11px;line-height:17px;color:#000;letter-spacing:0.6px;width:72px;text-align:right;overflow:hidden;">1,0000</div>
<div style="left:1474px;top:355px;width:200px;height:17px;background:#fff;"></div>
<div style="left:1675px;top:355px;width:200px;height:17px;background:#fff;"></div>
<div class="t " style="left:1677px;top:355.69px;font-size:11px;line-height:17px;color:#000;letter-spacing:0.45px;width:198px;text-align:left;overflow:hidden;">Otomatik Eklenen Konaklama Ücreti</div>
<div style="left:1876px;top:355px;width:15px;height:17px;background:#fff;"></div>
<div class="t " style="left:1878px;top:355.69px;font-size:11px;line-height:17px;color:#000;letter-spacing:0.58px;width:13px;text-align:left;overflow:hidden;">SYS</div>
<div style="left:329px;top:372px;width:11px;height:1px;background:#dcdcdc;"></div>
<div style="left:341px;top:372px;width:1550px;height:1px;background:#f2f2f2;"></div>
<div style="left:341px;top:373px;width:70px;height:17px;background:#d0e8fd;"></div>
<div class="t " style="left:343px;top:373.69px;font-size:11px;line-height:17px;color:#000;letter-spacing:0.15px;width:68px;text-align:left;overflow:hidden;">Fiş (B)</div>
<div style="left:412px;top:373px;width:116px;height:17px;background:#f0f0f0;"></div>
<div class="t " style="left:414px;top:373.69px;font-size:11px;line-height:17px;color:#000;letter-spacing:0.58px;width:114px;text-align:left;overflow:hidden;">Mali Sorumlu</div>
<div style="left:529px;top:373px;width:104px;height:17px;background:#d0e8fd;"></div>
<div class="t " style="left:531px;top:373.69px;font-size:11px;line-height:17px;color:#000;letter-spacing:0.6px;width:102px;text-align:left;overflow:hidden;">28.01.2026 17:16:41</div>
<div style="left:634px;top:373px;width:242px;height:17px;background:#d0e8fd;"></div>
<div class="t " style="left:636px;top:373.69px;font-size:11px;line-height:17px;color:#000;letter-spacing:0.6px;width:240px;text-align:left;overflow:hidden;">18.01.2026 17:16:41</div>
<div style="left:877px;top:373px;width:61px;height:17px;background:#d0e8fd;"></div>
<div class="t " style="left:877px;top:373.69px;font-size:11px;line-height:17px;color:#000;letter-spacing:0.6px;width:59px;text-align:right;overflow:hidden;">100</div>
<div style="left:939px;top:373px;width:185px;height:17px;background:#d0e8fd;"></div>
<div class="t " style="left:941px;top:373.69px;font-size:11px;line-height:17px;color:#000;letter-spacing:0.58px;width:183px;text-align:left;overflow:hidden;">Oda Ücreti</div>
<div style="left:1125px;top:373px;width:74px;height:17px;background:#d0e8fd;"></div>
<div class="t " style="left:1125px;top:373.69px;font-size:11px;line-height:17px;color:#000;letter-spacing:0.6px;width:72px;text-align:right;overflow:hidden;">3.500,00</div>
<div style="left:1200px;top:373px;width:73px;height:17px;background:#d0e8fd;"></div>
<div class="t " style="left:1202px;top:373.69px;font-size:11px;line-height:17px;color:#000;letter-spacing:0.58px;width:71px;text-align:left;overflow:hidden;">TL</div>
<div style="left:1274px;top:373px;width:76px;height:17px;background:#d0e8fd;"></div>
<div class="t " style="left:1274px;top:373.69px;font-size:11px;line-height:17px;color:#000;letter-spacing:0.6px;width:74px;text-align:right;overflow:hidden;">3.500,00</div>
<div style="left:1351px;top:373px;width:47px;height:17px;background:#d0e8fd;"></div>
<div class="t " style="left:1353px;top:373.69px;font-size:11px;line-height:17px;color:#000;letter-spacing:0.58px;width:45px;text-align:left;overflow:hidden;">TL</div>
<div style="left:1399px;top:373px;width:74px;height:17px;background:#d0e8fd;"></div>
<div class="t " style="left:1399px;top:373.69px;font-size:11px;line-height:17px;color:#000;letter-spacing:0.6px;width:72px;text-align:right;overflow:hidden;">1,0000</div>
<div style="left:1474px;top:373px;width:200px;height:17px;background:#d0e8fd;"></div>
<div style="left:1675px;top:373px;width:200px;height:17px;background:#d0e8fd;"></div>
<div class="t " style="left:1677px;top:373.69px;font-size:11px;line-height:17px;color:#000;letter-spacing:0.45px;width:198px;text-align:left;overflow:hidden;">Otomatik Eklenen Konaklama Ücreti</div>
<div style="left:1876px;top:373px;width:15px;height:17px;background:#d0e8fd;"></div>
<div class="t " style="left:1878px;top:373.69px;font-size:11px;line-height:17px;color:#000;letter-spacing:0.58px;width:13px;text-align:left;overflow:hidden;">SYS</div>
<div style="left:329px;top:390px;width:11px;height:1px;background:#dcdcdc;"></div>
<div style="left:341px;top:390px;width:1550px;height:1px;background:#f2f2f2;"></div>
<div style="left:341px;top:391px;width:70px;height:17px;background:#fff;"></div>
<div class="t " style="left:343px;top:391.69px;font-size:11px;line-height:17px;color:#000;letter-spacing:0.15px;width:68px;text-align:left;overflow:hidden;">Fiş (B)</div>
<div style="left:412px;top:391px;width:116px;height:17px;background:#f0f0f0;"></div>
<div class="t " style="left:414px;top:391.69px;font-size:11px;line-height:17px;color:#000;letter-spacing:0.58px;width:114px;text-align:left;overflow:hidden;">Mali Sorumlu</div>
<div style="left:529px;top:391px;width:104px;height:17px;background:#fff;"></div>
<div class="t " style="left:531px;top:391.69px;font-size:11px;line-height:17px;color:#000;letter-spacing:0.6px;width:102px;text-align:left;overflow:hidden;">28.01.2026 17:16:41</div>
<div style="left:634px;top:391px;width:242px;height:17px;background:#fff;"></div>
<div class="t " style="left:636px;top:391.69px;font-size:11px;line-height:17px;color:#000;letter-spacing:0.6px;width:240px;text-align:left;overflow:hidden;">19.01.2026 17:16:41</div>
<div style="left:877px;top:391px;width:61px;height:17px;background:#fff;"></div>
<div class="t " style="left:877px;top:391.69px;font-size:11px;line-height:17px;color:#000;letter-spacing:0.6px;width:59px;text-align:right;overflow:hidden;">100</div>
<div style="left:939px;top:391px;width:185px;height:17px;background:#fff;"></div>
<div class="t " style="left:941px;top:391.69px;font-size:11px;line-height:17px;color:#000;letter-spacing:0.58px;width:183px;text-align:left;overflow:hidden;">Oda Ücreti</div>
<div style="left:1125px;top:391px;width:74px;height:17px;background:#fff;"></div>
<div class="t " style="left:1125px;top:391.69px;font-size:11px;line-height:17px;color:#000;letter-spacing:0.6px;width:72px;text-align:right;overflow:hidden;">3.500,00</div>
<div style="left:1200px;top:391px;width:73px;height:17px;background:#fff;"></div>
<div class="t " style="left:1202px;top:391.69px;font-size:11px;line-height:17px;color:#000;letter-spacing:0.58px;width:71px;text-align:left;overflow:hidden;">TL</div>
<div style="left:1274px;top:391px;width:76px;height:17px;background:#fff;"></div>
<div class="t " style="left:1274px;top:391.69px;font-size:11px;line-height:17px;color:#000;letter-spacing:0.6px;width:74px;text-align:right;overflow:hidden;">3.500,00</div>
<div style="left:1351px;top:391px;width:47px;height:17px;background:#fff;"></div>
<div class="t " style="left:1353px;top:391.69px;font-size:11px;line-height:17px;color:#000;letter-spacing:0.58px;width:45px;text-align:left;overflow:hidden;">TL</div>
<div style="left:1399px;top:391px;width:74px;height:17px;background:#fff;"></div>
<div class="t " style="left:1399px;top:391.69px;font-size:11px;line-height:17px;color:#000;letter-spacing:0.6px;width:72px;text-align:right;overflow:hidden;">1,0000</div>
<div style="left:1474px;top:391px;width:200px;height:17px;background:#fff;"></div>
<div style="left:1675px;top:391px;width:200px;height:17px;background:#fff;"></div>
<div class="t " style="left:1677px;top:391.69px;font-size:11px;line-height:17px;color:#000;letter-spacing:0.45px;width:198px;text-align:left;overflow:hidden;">Otomatik Eklenen Konaklama Ücreti</div>
<div style="left:1876px;top:391px;width:15px;height:17px;background:#fff;"></div>
<div class="t " style="left:1878px;top:391.69px;font-size:11px;line-height:17px;color:#000;letter-spacing:0.58px;width:13px;text-align:left;overflow:hidden;">SYS</div>
<div style="left:329px;top:408px;width:11px;height:1px;background:#dcdcdc;"></div>
<div style="left:341px;top:408px;width:1550px;height:1px;background:#f2f2f2;"></div>
<div style="left:341px;top:409px;width:70px;height:17px;background:#d0e8fd;"></div>
<div class="t " style="left:343px;top:409.69px;font-size:11px;line-height:17px;color:#000;letter-spacing:0.15px;width:68px;text-align:left;overflow:hidden;">Fiş (B)</div>
<div style="left:412px;top:409px;width:116px;height:17px;background:#f0f0f0;"></div>
<div class="t " style="left:414px;top:409.69px;font-size:11px;line-height:17px;color:#000;letter-spacing:0.58px;width:114px;text-align:left;overflow:hidden;">Mali Sorumlu</div>
<div style="left:529px;top:409px;width:104px;height:17px;background:#d0e8fd;"></div>
<div class="t " style="left:531px;top:409.69px;font-size:11px;line-height:17px;color:#000;letter-spacing:0.6px;width:102px;text-align:left;overflow:hidden;">28.01.2026 17:16:41</div>
<div style="left:634px;top:409px;width:242px;height:17px;background:#d0e8fd;"></div>
<div class="t " style="left:636px;top:409.69px;font-size:11px;line-height:17px;color:#000;letter-spacing:0.6px;width:240px;text-align:left;overflow:hidden;">20.01.2026 17:16:41</div>
<div style="left:877px;top:409px;width:61px;height:17px;background:#d0e8fd;"></div>
<div class="t " style="left:877px;top:409.69px;font-size:11px;line-height:17px;color:#000;letter-spacing:0.6px;width:59px;text-align:right;overflow:hidden;">100</div>
<div style="left:939px;top:409px;width:185px;height:17px;background:#d0e8fd;"></div>
<div class="t " style="left:941px;top:409.69px;font-size:11px;line-height:17px;color:#000;letter-spacing:0.58px;width:183px;text-align:left;overflow:hidden;">Oda Ücreti</div>
<div style="left:1125px;top:409px;width:74px;height:17px;background:#d0e8fd;"></div>
<div class="t " style="left:1125px;top:409.69px;font-size:11px;line-height:17px;color:#000;letter-spacing:0.6px;width:72px;text-align:right;overflow:hidden;">3.500,00</div>
<div style="left:1200px;top:409px;width:73px;height:17px;background:#d0e8fd;"></div>
<div class="t " style="left:1202px;top:409.69px;font-size:11px;line-height:17px;color:#000;letter-spacing:0.58px;width:71px;text-align:left;overflow:hidden;">TL</div>
<div style="left:1274px;top:409px;width:76px;height:17px;background:#d0e8fd;"></div>
<div class="t " style="left:1274px;top:409.69px;font-size:11px;line-height:17px;color:#000;letter-spacing:0.6px;width:74px;text-align:right;overflow:hidden;">3.500,00</div>
<div style="left:1351px;top:409px;width:47px;height:17px;background:#d0e8fd;"></div>
<div class="t " style="left:1353px;top:409.69px;font-size:11px;line-height:17px;color:#000;letter-spacing:0.58px;width:45px;text-align:left;overflow:hidden;">TL</div>
<div style="left:1399px;top:409px;width:74px;height:17px;background:#d0e8fd;"></div>
<div class="t " style="left:1399px;top:409.69px;font-size:11px;line-height:17px;color:#000;letter-spacing:0.6px;width:72px;text-align:right;overflow:hidden;">1,0000</div>
<div style="left:1474px;top:409px;width:200px;height:17px;background:#d0e8fd;"></div>
<div style="left:1675px;top:409px;width:200px;height:17px;background:#d0e8fd;"></div>
<div class="t " style="left:1677px;top:409.69px;font-size:11px;line-height:17px;color:#000;letter-spacing:0.45px;width:198px;text-align:left;overflow:hidden;">Otomatik Eklenen Konaklama Ücreti</div>
<div style="left:1876px;top:409px;width:15px;height:17px;background:#d0e8fd;"></div>
<div class="t " style="left:1878px;top:409.69px;font-size:11px;line-height:17px;color:#000;letter-spacing:0.58px;width:13px;text-align:left;overflow:hidden;">SYS</div>
<div style="left:329px;top:426px;width:11px;height:1px;background:#dcdcdc;"></div>
<div style="left:341px;top:426px;width:1550px;height:1px;background:#f2f2f2;"></div>
<div style="left:341px;top:427px;width:70px;height:17px;background:#fff;"></div>
<div class="t " style="left:343px;top:427.69px;font-size:11px;line-height:17px;color:#000;letter-spacing:0.15px;width:68px;text-align:left;overflow:hidden;">Fiş (B)</div>
<div style="left:412px;top:427px;width:116px;height:17px;background:#f0f0f0;"></div>
<div class="t " style="left:414px;top:427.69px;font-size:11px;line-height:17px;color:#000;letter-spacing:0.58px;width:114px;text-align:left;overflow:hidden;">Mali Sorumlu</div>
<div style="left:529px;top:427px;width:104px;height:17px;background:#fff;"></div>
<div class="t " style="left:531px;top:427.69px;font-size:11px;line-height:17px;color:#000;letter-spacing:0.6px;width:102px;text-align:left;overflow:hidden;">28.01.2026 17:16:41</div>
<div style="left:634px;top:427px;width:242px;height:17px;background:#fff;"></div>
<div class="t " style="left:636px;top:427.69px;font-size:11px;line-height:17px;color:#000;letter-spacing:0.6px;width:240px;text-align:left;overflow:hidden;">21.01.2026 17:16:41</div>
<div style="left:877px;top:427px;width:61px;height:17px;background:#fff;"></div>
<div class="t " style="left:877px;top:427.69px;font-size:11px;line-height:17px;color:#000;letter-spacing:0.6px;width:59px;text-align:right;overflow:hidden;">100</div>
<div style="left:939px;top:427px;width:185px;height:17px;background:#fff;"></div>
<div class="t " style="left:941px;top:427.69px;font-size:11px;line-height:17px;color:#000;letter-spacing:0.58px;width:183px;text-align:left;overflow:hidden;">Oda Ücreti</div>
<div style="left:1125px;top:427px;width:74px;height:17px;background:#fff;"></div>
<div class="t " style="left:1125px;top:427.69px;font-size:11px;line-height:17px;color:#000;letter-spacing:0.6px;width:72px;text-align:right;overflow:hidden;">3.500,00</div>
<div style="left:1200px;top:427px;width:73px;height:17px;background:#fff;"></div>
<div class="t " style="left:1202px;top:427.69px;font-size:11px;line-height:17px;color:#000;letter-spacing:0.58px;width:71px;text-align:left;overflow:hidden;">TL</div>
<div style="left:1274px;top:427px;width:76px;height:17px;background:#fff;"></div>
<div class="t " style="left:1274px;top:427.69px;font-size:11px;line-height:17px;color:#000;letter-spacing:0.6px;width:74px;text-align:right;overflow:hidden;">3.500,00</div>
<div style="left:1351px;top:427px;width:47px;height:17px;background:#fff;"></div>
<div class="t " style="left:1353px;top:427.69px;font-size:11px;line-height:17px;color:#000;letter-spacing:0.58px;width:45px;text-align:left;overflow:hidden;">TL</div>
<div style="left:1399px;top:427px;width:74px;height:17px;background:#fff;"></div>
<div class="t " style="left:1399px;top:427.69px;font-size:11px;line-height:17px;color:#000;letter-spacing:0.6px;width:72px;text-align:right;overflow:hidden;">1,0000</div>
<div style="left:1474px;top:427px;width:200px;height:17px;background:#fff;"></div>
<div style="left:1675px;top:427px;width:200px;height:17px;background:#fff;"></div>
<div class="t " style="left:1677px;top:427.69px;font-size:11px;line-height:17px;color:#000;letter-spacing:0.45px;width:198px;text-align:left;overflow:hidden;">Otomatik Eklenen Konaklama Ücreti</div>
<div style="left:1876px;top:427px;width:15px;height:17px;background:#fff;"></div>
<div class="t " style="left:1878px;top:427.69px;font-size:11px;line-height:17px;color:#000;letter-spacing:0.58px;width:13px;text-align:left;overflow:hidden;">SYS</div>
<div style="left:329px;top:444px;width:11px;height:1px;background:#dcdcdc;"></div>
<div style="left:341px;top:444px;width:1550px;height:1px;background:#f2f2f2;"></div>
<div style="left:341px;top:445px;width:70px;height:17px;background:#d0e8fd;"></div>
<div class="t " style="left:343px;top:445.69px;font-size:11px;line-height:17px;color:#000;letter-spacing:0.15px;width:68px;text-align:left;overflow:hidden;">Fiş (B)</div>
<div style="left:412px;top:445px;width:116px;height:17px;background:#f0f0f0;"></div>
<div class="t " style="left:414px;top:445.69px;font-size:11px;line-height:17px;color:#000;letter-spacing:0.58px;width:114px;text-align:left;overflow:hidden;">Mali Sorumlu</div>
<div style="left:529px;top:445px;width:104px;height:17px;background:#d0e8fd;"></div>
<div class="t " style="left:531px;top:445.69px;font-size:11px;line-height:17px;color:#000;letter-spacing:0.6px;width:102px;text-align:left;overflow:hidden;">28.01.2026 17:16:41</div>
<div style="left:634px;top:445px;width:242px;height:17px;background:#d0e8fd;"></div>
<div class="t " style="left:636px;top:445.69px;font-size:11px;line-height:17px;color:#000;letter-spacing:0.6px;width:240px;text-align:left;overflow:hidden;">22.01.2026 17:16:41</div>
<div style="left:877px;top:445px;width:61px;height:17px;background:#d0e8fd;"></div>
<div class="t " style="left:877px;top:445.69px;font-size:11px;line-height:17px;color:#000;letter-spacing:0.6px;width:59px;text-align:right;overflow:hidden;">100</div>
<div style="left:939px;top:445px;width:185px;height:17px;background:#d0e8fd;"></div>
<div class="t " style="left:941px;top:445.69px;font-size:11px;line-height:17px;color:#000;letter-spacing:0.58px;width:183px;text-align:left;overflow:hidden;">Oda Ücreti</div>
<div style="left:1125px;top:445px;width:74px;height:17px;background:#d0e8fd;"></div>
<div class="t " style="left:1125px;top:445.69px;font-size:11px;line-height:17px;color:#000;letter-spacing:0.6px;width:72px;text-align:right;overflow:hidden;">3.500,00</div>
<div style="left:1200px;top:445px;width:73px;height:17px;background:#d0e8fd;"></div>
<div class="t " style="left:1202px;top:445.69px;font-size:11px;line-height:17px;color:#000;letter-spacing:0.58px;width:71px;text-align:left;overflow:hidden;">TL</div>
<div style="left:1274px;top:445px;width:76px;height:17px;background:#d0e8fd;"></div>
<div class="t " style="left:1274px;top:445.69px;font-size:11px;line-height:17px;color:#000;letter-spacing:0.6px;width:74px;text-align:right;overflow:hidden;">3.500,00</div>
<div style="left:1351px;top:445px;width:47px;height:17px;background:#d0e8fd;"></div>
<div class="t " style="left:1353px;top:445.69px;font-size:11px;line-height:17px;color:#000;letter-spacing:0.58px;width:45px;text-align:left;overflow:hidden;">TL</div>
<div style="left:1399px;top:445px;width:74px;height:17px;background:#d0e8fd;"></div>
<div class="t " style="left:1399px;top:445.69px;font-size:11px;line-height:17px;color:#000;letter-spacing:0.6px;width:72px;text-align:right;overflow:hidden;">1,0000</div>
<div style="left:1474px;top:445px;width:200px;height:17px;background:#d0e8fd;"></div>
<div style="left:1675px;top:445px;width:200px;height:17px;background:#d0e8fd;"></div>
<div class="t " style="left:1677px;top:445.69px;font-size:11px;line-height:17px;color:#000;letter-spacing:0.45px;width:198px;text-align:left;overflow:hidden;">Otomatik Eklenen Konaklama Ücreti</div>
<div style="left:1876px;top:445px;width:15px;height:17px;background:#d0e8fd;"></div>
<div class="t " style="left:1878px;top:445.69px;font-size:11px;line-height:17px;color:#000;letter-spacing:0.58px;width:13px;text-align:left;overflow:hidden;">SYS</div>
<div style="left:329px;top:462px;width:11px;height:1px;background:#dcdcdc;"></div>
<div style="left:341px;top:462px;width:1550px;height:1px;background:#f2f2f2;"></div>
<div style="left:341px;top:463px;width:70px;height:17px;background:#fff;"></div>
<div class="t " style="left:343px;top:463.69px;font-size:11px;line-height:17px;color:#000;letter-spacing:0.15px;width:68px;text-align:left;overflow:hidden;">Fiş (B)</div>
<div style="left:412px;top:463px;width:116px;height:17px;background:#f0f0f0;"></div>
<div class="t " style="left:414px;top:463.69px;font-size:11px;line-height:17px;color:#000;letter-spacing:0.58px;width:114px;text-align:left;overflow:hidden;">Mali Sorumlu</div>
<div style="left:529px;top:463px;width:104px;height:17px;background:#fff;"></div>
<div class="t " style="left:531px;top:463.69px;font-size:11px;line-height:17px;color:#000;letter-spacing:0.6px;width:102px;text-align:left;overflow:hidden;">28.01.2026 17:16:41</div>
<div style="left:634px;top:463px;width:242px;height:17px;background:#fff;"></div>
<div class="t " style="left:636px;top:463.69px;font-size:11px;line-height:17px;color:#000;letter-spacing:0.6px;width:240px;text-align:left;overflow:hidden;">23.01.2026 17:16:41</div>
<div style="left:877px;top:463px;width:61px;height:17px;background:#fff;"></div>
<div class="t " style="left:877px;top:463.69px;font-size:11px;line-height:17px;color:#000;letter-spacing:0.6px;width:59px;text-align:right;overflow:hidden;">100</div>
<div style="left:939px;top:463px;width:185px;height:17px;background:#fff;"></div>
<div class="t " style="left:941px;top:463.69px;font-size:11px;line-height:17px;color:#000;letter-spacing:0.58px;width:183px;text-align:left;overflow:hidden;">Oda Ücreti</div>
<div style="left:1125px;top:463px;width:74px;height:17px;background:#fff;"></div>
<div class="t " style="left:1125px;top:463.69px;font-size:11px;line-height:17px;color:#000;letter-spacing:0.6px;width:72px;text-align:right;overflow:hidden;">3.500,00</div>
<div style="left:1200px;top:463px;width:73px;height:17px;background:#fff;"></div>
<div class="t " style="left:1202px;top:463.69px;font-size:11px;line-height:17px;color:#000;letter-spacing:0.58px;width:71px;text-align:left;overflow:hidden;">TL</div>
<div style="left:1274px;top:463px;width:76px;height:17px;background:#fff;"></div>
<div class="t " style="left:1274px;top:463.69px;font-size:11px;line-height:17px;color:#000;letter-spacing:0.6px;width:74px;text-align:right;overflow:hidden;">3.500,00</div>
<div style="left:1351px;top:463px;width:47px;height:17px;background:#fff;"></div>
<div class="t " style="left:1353px;top:463.69px;font-size:11px;line-height:17px;color:#000;letter-spacing:0.58px;width:45px;text-align:left;overflow:hidden;">TL</div>
<div style="left:1399px;top:463px;width:74px;height:17px;background:#fff;"></div>
<div class="t " style="left:1399px;top:463.69px;font-size:11px;line-height:17px;color:#000;letter-spacing:0.6px;width:72px;text-align:right;overflow:hidden;">1,0000</div>
<div style="left:1474px;top:463px;width:200px;height:17px;background:#fff;"></div>
<div style="left:1675px;top:463px;width:200px;height:17px;background:#fff;"></div>
<div class="t " style="left:1677px;top:463.69px;font-size:11px;line-height:17px;color:#000;letter-spacing:0.45px;width:198px;text-align:left;overflow:hidden;">Otomatik Eklenen Konaklama Ücreti</div>
<div style="left:1876px;top:463px;width:15px;height:17px;background:#fff;"></div>
<div class="t " style="left:1878px;top:463.69px;font-size:11px;line-height:17px;color:#000;letter-spacing:0.58px;width:13px;text-align:left;overflow:hidden;">SYS</div>
<div style="left:329px;top:480px;width:11px;height:1px;background:#dcdcdc;"></div>
<div style="left:341px;top:480px;width:1550px;height:1px;background:#f2f2f2;"></div>
<div style="left:341px;top:481px;width:70px;height:17px;background:#d0e8fd;"></div>
<div class="t " style="left:343px;top:481.69px;font-size:11px;line-height:17px;color:#000;letter-spacing:0.15px;width:68px;text-align:left;overflow:hidden;">Fiş (B)</div>
<div style="left:412px;top:481px;width:116px;height:17px;background:#f0f0f0;"></div>
<div class="t " style="left:414px;top:481.69px;font-size:11px;line-height:17px;color:#000;letter-spacing:0.58px;width:114px;text-align:left;overflow:hidden;">Mali Sorumlu</div>
<div style="left:529px;top:481px;width:104px;height:17px;background:#d0e8fd;"></div>
<div class="t " style="left:531px;top:481.69px;font-size:11px;line-height:17px;color:#000;letter-spacing:0.6px;width:102px;text-align:left;overflow:hidden;">28.01.2026 17:16:41</div>
<div style="left:634px;top:481px;width:242px;height:17px;background:#d0e8fd;"></div>
<div class="t " style="left:636px;top:481.69px;font-size:11px;line-height:17px;color:#000;letter-spacing:0.6px;width:240px;text-align:left;overflow:hidden;">24.01.2026 17:16:41</div>
<div style="left:877px;top:481px;width:61px;height:17px;background:#d0e8fd;"></div>
<div class="t " style="left:877px;top:481.69px;font-size:11px;line-height:17px;color:#000;letter-spacing:0.6px;width:59px;text-align:right;overflow:hidden;">100</div>
<div style="left:939px;top:481px;width:185px;height:17px;background:#d0e8fd;"></div>
<div class="t " style="left:941px;top:481.69px;font-size:11px;line-height:17px;color:#000;letter-spacing:0.58px;width:183px;text-align:left;overflow:hidden;">Oda Ücreti</div>
<div style="left:1125px;top:481px;width:74px;height:17px;background:#d0e8fd;"></div>
<div class="t " style="left:1125px;top:481.69px;font-size:11px;line-height:17px;color:#000;letter-spacing:0.6px;width:72px;text-align:right;overflow:hidden;">3.500,00</div>
<div style="left:1200px;top:481px;width:73px;height:17px;background:#d0e8fd;"></div>
<div class="t " style="left:1202px;top:481.69px;font-size:11px;line-height:17px;color:#000;letter-spacing:0.58px;width:71px;text-align:left;overflow:hidden;">TL</div>
<div style="left:1274px;top:481px;width:76px;height:17px;background:#d0e8fd;"></div>
<div class="t " style="left:1274px;top:481.69px;font-size:11px;line-height:17px;color:#000;letter-spacing:0.6px;width:74px;text-align:right;overflow:hidden;">3.500,00</div>
<div style="left:1351px;top:481px;width:47px;height:17px;background:#d0e8fd;"></div>
<div class="t " style="left:1353px;top:481.69px;font-size:11px;line-height:17px;color:#000;letter-spacing:0.58px;width:45px;text-align:left;overflow:hidden;">TL</div>
<div style="left:1399px;top:481px;width:74px;height:17px;background:#d0e8fd;"></div>
<div class="t " style="left:1399px;top:481.69px;font-size:11px;line-height:17px;color:#000;letter-spacing:0.6px;width:72px;text-align:right;overflow:hidden;">1,0000</div>
<div style="left:1474px;top:481px;width:200px;height:17px;background:#d0e8fd;"></div>
<div style="left:1675px;top:481px;width:200px;height:17px;background:#d0e8fd;"></div>
<div class="t " style="left:1677px;top:481.69px;font-size:11px;line-height:17px;color:#000;letter-spacing:0.45px;width:198px;text-align:left;overflow:hidden;">Otomatik Eklenen Konaklama Ücreti</div>
<div style="left:1876px;top:481px;width:15px;height:17px;background:#d0e8fd;"></div>
<div class="t " style="left:1878px;top:481.69px;font-size:11px;line-height:17px;color:#000;letter-spacing:0.58px;width:13px;text-align:left;overflow:hidden;">SYS</div>
<div style="left:329px;top:498px;width:11px;height:1px;background:#dcdcdc;"></div>
<div style="left:341px;top:498px;width:1550px;height:1px;background:#f2f2f2;"></div>
<div style="left:341px;top:499px;width:70px;height:17px;background:#fff;"></div>
<div class="t " style="left:343px;top:499.69px;font-size:11px;line-height:17px;color:#000;letter-spacing:0.15px;width:68px;text-align:left;overflow:hidden;">Fiş (B)</div>
<div style="left:412px;top:499px;width:116px;height:17px;background:#f0f0f0;"></div>
<div class="t " style="left:414px;top:499.69px;font-size:11px;line-height:17px;color:#000;letter-spacing:0.58px;width:114px;text-align:left;overflow:hidden;">Mali Sorumlu</div>
<div style="left:529px;top:499px;width:104px;height:17px;background:#fff;"></div>
<div class="t " style="left:531px;top:499.69px;font-size:11px;line-height:17px;color:#000;letter-spacing:0.6px;width:102px;text-align:left;overflow:hidden;">28.01.2026 17:16:41</div>
<div style="left:634px;top:499px;width:242px;height:17px;background:#fff;"></div>
<div class="t " style="left:636px;top:499.69px;font-size:11px;line-height:17px;color:#000;letter-spacing:0.6px;width:240px;text-align:left;overflow:hidden;">25.01.2026 17:16:41</div>
<div style="left:877px;top:499px;width:61px;height:17px;background:#fff;"></div>
<div class="t " style="left:877px;top:499.69px;font-size:11px;line-height:17px;color:#000;letter-spacing:0.6px;width:59px;text-align:right;overflow:hidden;">100</div>
<div style="left:939px;top:499px;width:185px;height:17px;background:#fff;"></div>
<div class="t " style="left:941px;top:499.69px;font-size:11px;line-height:17px;color:#000;letter-spacing:0.58px;width:183px;text-align:left;overflow:hidden;">Oda Ücreti</div>
<div style="left:1125px;top:499px;width:74px;height:17px;background:#fff;"></div>
<div class="t " style="left:1125px;top:499.69px;font-size:11px;line-height:17px;color:#000;letter-spacing:0.6px;width:72px;text-align:right;overflow:hidden;">3.500,00</div>
<div style="left:1200px;top:499px;width:73px;height:17px;background:#fff;"></div>
<div class="t " style="left:1202px;top:499.69px;font-size:11px;line-height:17px;color:#000;letter-spacing:0.58px;width:71px;text-align:left;overflow:hidden;">TL</div>
<div style="left:1274px;top:499px;width:76px;height:17px;background:#fff;"></div>
<div class="t " style="left:1274px;top:499.69px;font-size:11px;line-height:17px;color:#000;letter-spacing:0.6px;width:74px;text-align:right;overflow:hidden;">3.500,00</div>
<div style="left:1351px;top:499px;width:47px;height:17px;background:#fff;"></div>
<div class="t " style="left:1353px;top:499.69px;font-size:11px;line-height:17px;color:#000;letter-spacing:0.58px;width:45px;text-align:left;overflow:hidden;">TL</div>
<div style="left:1399px;top:499px;width:74px;height:17px;background:#fff;"></div>
<div class="t " style="left:1399px;top:499.69px;font-size:11px;line-height:17px;color:#000;letter-spacing:0.6px;width:72px;text-align:right;overflow:hidden;">1,0000</div>
<div style="left:1474px;top:499px;width:200px;height:17px;background:#fff;"></div>
<div style="left:1675px;top:499px;width:200px;height:17px;background:#fff;"></div>
<div class="t " style="left:1677px;top:499.69px;font-size:11px;line-height:17px;color:#000;letter-spacing:0.45px;width:198px;text-align:left;overflow:hidden;">Otomatik Eklenen Konaklama Ücreti</div>
<div style="left:1876px;top:499px;width:15px;height:17px;background:#fff;"></div>
<div class="t " style="left:1878px;top:499.69px;font-size:11px;line-height:17px;color:#000;letter-spacing:0.58px;width:13px;text-align:left;overflow:hidden;">SYS</div>
<div style="left:329px;top:516px;width:11px;height:1px;background:#dcdcdc;"></div>
<div style="left:341px;top:516px;width:1550px;height:1px;background:#f2f2f2;"></div>
<div style="left:341px;top:517px;width:70px;height:17px;background:#d0e8fd;"></div>
<div class="t " style="left:343px;top:517.69px;font-size:11px;line-height:17px;color:#000;letter-spacing:0.15px;width:68px;text-align:left;overflow:hidden;">Fiş (B)</div>
<div style="left:412px;top:517px;width:116px;height:17px;background:#f0f0f0;"></div>
<div class="t " style="left:414px;top:517.69px;font-size:11px;line-height:17px;color:#000;letter-spacing:0.58px;width:114px;text-align:left;overflow:hidden;">Mali Sorumlu</div>
<div style="left:529px;top:517px;width:104px;height:17px;background:#d0e8fd;"></div>
<div class="t " style="left:531px;top:517.69px;font-size:11px;line-height:17px;color:#000;letter-spacing:0.6px;width:102px;text-align:left;overflow:hidden;">28.01.2026 17:16:41</div>
<div style="left:634px;top:517px;width:242px;height:17px;background:#d0e8fd;"></div>
<div class="t " style="left:636px;top:517.69px;font-size:11px;line-height:17px;color:#000;letter-spacing:0.6px;width:240px;text-align:left;overflow:hidden;">26.01.2026 17:16:41</div>
<div style="left:877px;top:517px;width:61px;height:17px;background:#d0e8fd;"></div>
<div class="t " style="left:877px;top:517.69px;font-size:11px;line-height:17px;color:#000;letter-spacing:0.6px;width:59px;text-align:right;overflow:hidden;">100</div>
<div style="left:939px;top:517px;width:185px;height:17px;background:#d0e8fd;"></div>
<div class="t " style="left:941px;top:517.69px;font-size:11px;line-height:17px;color:#000;letter-spacing:0.58px;width:183px;text-align:left;overflow:hidden;">Oda Ücreti</div>
<div style="left:1125px;top:517px;width:74px;height:17px;background:#d0e8fd;"></div>
<div class="t " style="left:1125px;top:517.69px;font-size:11px;line-height:17px;color:#000;letter-spacing:0.6px;width:72px;text-align:right;overflow:hidden;">3.500,00</div>
<div style="left:1200px;top:517px;width:73px;height:17px;background:#d0e8fd;"></div>
<div class="t " style="left:1202px;top:517.69px;font-size:11px;line-height:17px;color:#000;letter-spacing:0.58px;width:71px;text-align:left;overflow:hidden;">TL</div>
<div style="left:1274px;top:517px;width:76px;height:17px;background:#d0e8fd;"></div>
<div class="t " style="left:1274px;top:517.69px;font-size:11px;line-height:17px;color:#000;letter-spacing:0.6px;width:74px;text-align:right;overflow:hidden;">3.500,00</div>
<div style="left:1351px;top:517px;width:47px;height:17px;background:#d0e8fd;"></div>
<div class="t " style="left:1353px;top:517.69px;font-size:11px;line-height:17px;color:#000;letter-spacing:0.58px;width:45px;text-align:left;overflow:hidden;">TL</div>
<div style="left:1399px;top:517px;width:74px;height:17px;background:#d0e8fd;"></div>
<div class="t " style="left:1399px;top:517.69px;font-size:11px;line-height:17px;color:#000;letter-spacing:0.6px;width:72px;text-align:right;overflow:hidden;">1,0000</div>
<div style="left:1474px;top:517px;width:200px;height:17px;background:#d0e8fd;"></div>
<div style="left:1675px;top:517px;width:200px;height:17px;background:#d0e8fd;"></div>
<div class="t " style="left:1677px;top:517.69px;font-size:11px;line-height:17px;color:#000;letter-spacing:0.45px;width:198px;text-align:left;overflow:hidden;">Otomatik Eklenen Konaklama Ücreti</div>
<div style="left:1876px;top:517px;width:15px;height:17px;background:#d0e8fd;"></div>
<div class="t " style="left:1878px;top:517.69px;font-size:11px;line-height:17px;color:#000;letter-spacing:0.58px;width:13px;text-align:left;overflow:hidden;">SYS</div>
<div style="left:329px;top:534px;width:11px;height:1px;background:#dcdcdc;"></div>
<div style="left:341px;top:534px;width:1550px;height:1px;background:#f2f2f2;"></div>
<div style="left:341px;top:535px;width:70px;height:17px;background:#fff;"></div>
<div class="t " style="left:343px;top:535.69px;font-size:11px;line-height:17px;color:#000;letter-spacing:0.15px;width:68px;text-align:left;overflow:hidden;">Fiş (B)</div>
<div style="left:412px;top:535px;width:116px;height:17px;background:#f0f0f0;"></div>
<div class="t " style="left:414px;top:535.69px;font-size:11px;line-height:17px;color:#000;letter-spacing:0.58px;width:114px;text-align:left;overflow:hidden;">Mali Sorumlu</div>
<div style="left:529px;top:535px;width:104px;height:17px;background:#fff;"></div>
<div class="t " style="left:531px;top:535.69px;font-size:11px;line-height:17px;color:#000;letter-spacing:0.6px;width:102px;text-align:left;overflow:hidden;">28.01.2026 17:16:41</div>
<div style="left:634px;top:535px;width:242px;height:17px;background:#fff;"></div>
<div class="t " style="left:636px;top:535.69px;font-size:11px;line-height:17px;color:#000;letter-spacing:0.6px;width:240px;text-align:left;overflow:hidden;">27.01.2026 17:16:41</div>
<div style="left:877px;top:535px;width:61px;height:17px;background:#fff;"></div>
<div class="t " style="left:877px;top:535.69px;font-size:11px;line-height:17px;color:#000;letter-spacing:0.6px;width:59px;text-align:right;overflow:hidden;">100</div>
<div style="left:939px;top:535px;width:185px;height:17px;background:#fff;"></div>
<div class="t " style="left:941px;top:535.69px;font-size:11px;line-height:17px;color:#000;letter-spacing:0.58px;width:183px;text-align:left;overflow:hidden;">Oda Ücreti</div>
<div style="left:1125px;top:535px;width:74px;height:17px;background:#fff;"></div>
<div class="t " style="left:1125px;top:535.69px;font-size:11px;line-height:17px;color:#000;letter-spacing:0.6px;width:72px;text-align:right;overflow:hidden;">3.500,00</div>
<div style="left:1200px;top:535px;width:73px;height:17px;background:#fff;"></div>
<div class="t " style="left:1202px;top:535.69px;font-size:11px;line-height:17px;color:#000;letter-spacing:0.58px;width:71px;text-align:left;overflow:hidden;">TL</div>
<div style="left:1274px;top:535px;width:76px;height:17px;background:#fff;"></div>
<div class="t " style="left:1274px;top:535.69px;font-size:11px;line-height:17px;color:#000;letter-spacing:0.6px;width:74px;text-align:right;overflow:hidden;">3.500,00</div>
<div style="left:1351px;top:535px;width:47px;height:17px;background:#fff;"></div>
<div class="t " style="left:1353px;top:535.69px;font-size:11px;line-height:17px;color:#000;letter-spacing:0.58px;width:45px;text-align:left;overflow:hidden;">TL</div>
<div style="left:1399px;top:535px;width:74px;height:17px;background:#fff;"></div>
<div class="t " style="left:1399px;top:535.69px;font-size:11px;line-height:17px;color:#000;letter-spacing:0.6px;width:72px;text-align:right;overflow:hidden;">1,0000</div>
<div style="left:1474px;top:535px;width:200px;height:17px;background:#fff;"></div>
<div style="left:1675px;top:535px;width:200px;height:17px;background:#fff;"></div>
<div class="t " style="left:1677px;top:535.69px;font-size:11px;line-height:17px;color:#000;letter-spacing:0.45px;width:198px;text-align:left;overflow:hidden;">Otomatik Eklenen Konaklama Ücreti</div>
<div style="left:1876px;top:535px;width:15px;height:17px;background:#fff;"></div>
<div class="t " style="left:1878px;top:535.69px;font-size:11px;line-height:17px;color:#000;letter-spacing:0.58px;width:13px;text-align:left;overflow:hidden;">SYS</div>
<div style="left:329px;top:552px;width:11px;height:1px;background:#dcdcdc;"></div>
<div style="left:341px;top:552px;width:1550px;height:1px;background:#f2f2f2;"></div>
<div style="left:411px;top:193px;width:1px;height:359px;background:#ebebeb;"></div>
<div style="left:528px;top:193px;width:1px;height:359px;background:#ebebeb;"></div>
<div style="left:633px;top:193px;width:1px;height:359px;background:#ebebeb;"></div>
<div style="left:876px;top:193px;width:1px;height:359px;background:#ebebeb;"></div>
<div style="left:938px;top:193px;width:1px;height:359px;background:#ebebeb;"></div>
<div style="left:1124px;top:193px;width:1px;height:359px;background:#ebebeb;"></div>
<div style="left:1199px;top:193px;width:1px;height:359px;background:#ebebeb;"></div>
<div style="left:1273px;top:193px;width:1px;height:359px;background:#ebebeb;"></div>
<div style="left:1350px;top:193px;width:1px;height:359px;background:#ebebeb;"></div>
<div style="left:1398px;top:193px;width:1px;height:359px;background:#ebebeb;"></div>
<div style="left:1473px;top:193px;width:1px;height:359px;background:#ebebeb;"></div>
<div style="left:1674px;top:193px;width:1px;height:359px;background:#ebebeb;"></div>
<div style="left:1875px;top:193px;width:1px;height:359px;background:#ebebeb;"></div>
<div style="left:340px;top:174px;width:1px;height:379px;background:#dcdcdc;"></div>
<div style="left:332px;top:412px;width:6px;height:11px;background:#efefef;"></div>
<svg style="left:332px;top:412px" width="6" height="11"><path d="M0 0 L5.5 5.5 L0 11 Z" fill="#000"/></svg>
<div style="left:634px;top:409px;width:243px;height:18px;border:1px dotted #222;"></div>
<div style="left:320px;top:168px;width:93px;height:395px;border:3px solid #ee3766;border-radius:3px;"></div>
<div style="left:1891px;top:174px;width:17px;height:541px;background:#f0f0f0;"></div>
<div style="left:1891px;top:347px;width:16px;height:259px;background:#cdcdcd;"></div>
<svg style="left:1894px;top:181px" width="10" height="7"><path d="M1 5.5 L5 1.5 L9 5.5" fill="none" stroke="#505050" stroke-width="1.8"/></svg>
<svg style="left:1894px;top:702px" width="10" height="7"><path d="M1 1.5 L5 5.5 L9 1.5" fill="none" stroke="#505050" stroke-width="1.8"/></svg>
<div style="left:328px;top:715px;width:1580px;height:17px;background:#f0f0f0;"></div>
<div style="left:346px;top:716px;width:17px;height:15px;background:#cdcdcd;"></div>
<svg style="left:334px;top:718px" width="7" height="10"><path d="M5.5 1 L1.5 5 L5.5 9" fill="none" stroke="#505050" stroke-width="1.8"/></svg>
<svg style="left:1879px;top:718px" width="7" height="10"><path d="M1.5 1 L5.5 5 L1.5 9" fill="none" stroke="#505050" stroke-width="1.8"/></svg>
<div class="t " style="left:327px;top:731.69px;font-size:11px;line-height:17px;color:#000;letter-spacing:0.34px;">Not : Toplu seçim yapabilmek için "Shift" veya "Shift+Ctrl"tuşlarını kullanabilirsiniz.</div>
<div style="left:327px;top:747px;width:1582px;height:6px;background:linear-gradient(180deg,#fafafa,#dcdcdc 60%,#b8b8b8);"></div>
<svg style="left:1098px;top:748px" width="3" height="3"><rect x="1" y="1" width="2" height="2" fill="#fff"/><rect x="0" y="0" width="2" height="2" fill="#444"/></svg>
<svg style="left:1102px;top:748px" width="3" height="3"><rect x="1" y="1" width="2" height="2" fill="#fff"/><rect x="0" y="0" width="2" height="2" fill="#444"/></svg>
<svg style="left:1106px;top:748px" width="3" height="3"><rect x="1" y="1" width="2" height="2" fill="#fff"/><rect x="0" y="0" width="2" height="2" fill="#444"/></svg>
<svg style="left:1110px;top:748px" width="3" height="3"><rect x="1" y="1" width="2" height="2" fill="#fff"/><rect x="0" y="0" width="2" height="2" fill="#444"/></svg>
<svg style="left:1114px;top:748px" width="3" height="3"><rect x="1" y="1" width="2" height="2" fill="#fff"/><rect x="0" y="0" width="2" height="2" fill="#444"/></svg>
<svg style="left:1118px;top:748px" width="3" height="3"><rect x="1" y="1" width="2" height="2" fill="#fff"/><rect x="0" y="0" width="2" height="2" fill="#444"/></svg>
<svg style="left:1122px;top:748px" width="3" height="3"><rect x="1" y="1" width="2" height="2" fill="#fff"/><rect x="0" y="0" width="2" height="2" fill="#444"/></svg>
<svg style="left:1126px;top:748px" width="3" height="3"><rect x="1" y="1" width="2" height="2" fill="#fff"/><rect x="0" y="0" width="2" height="2" fill="#444"/></svg>
<svg style="left:1130px;top:748px" width="3" height="3"><rect x="1" y="1" width="2" height="2" fill="#fff"/><rect x="0" y="0" width="2" height="2" fill="#444"/></svg>
<svg style="left:1134px;top:748px" width="3" height="3"><rect x="1" y="1" width="2" height="2" fill="#fff"/><rect x="0" y="0" width="2" height="2" fill="#444"/></svg>
<div style="left:330px;top:868px;width:1573px;height:6px;background:linear-gradient(180deg,#fafafa,#dcdcdc 60%,#b8b8b8);"></div>
<svg style="left:1098px;top:869px" width="3" height="3"><rect x="1" y="1" width="2" height="2" fill="#fff"/><rect x="0" y="0" width="2" height="2" fill="#444"/></svg>
<svg style="left:1102px;top:869px" width="3" height="3"><rect x="1" y="1" width="2" height="2" fill="#fff"/><rect x="0" y="0" width="2" height="2" fill="#444"/></svg>
<svg style="left:1106px;top:869px" width="3" height="3"><rect x="1" y="1" width="2" height="2" fill="#fff"/><rect x="0" y="0" width="2" height="2" fill="#444"/></svg>
<svg style="left:1110px;top:869px" width="3" height="3"><rect x="1" y="1" width="2" height="2" fill="#fff"/><rect x="0" y="0" width="2" height="2" fill="#444"/></svg>
<svg style="left:1114px;top:869px" width="3" height="3"><rect x="1" y="1" width="2" height="2" fill="#fff"/><rect x="0" y="0" width="2" height="2" fill="#444"/></svg>
<svg style="left:1118px;top:869px" width="3" height="3"><rect x="1" y="1" width="2" height="2" fill="#fff"/><rect x="0" y="0" width="2" height="2" fill="#444"/></svg>
<svg style="left:1122px;top:869px" width="3" height="3"><rect x="1" y="1" width="2" height="2" fill="#fff"/><rect x="0" y="0" width="2" height="2" fill="#444"/></svg>
<svg style="left:1126px;top:869px" width="3" height="3"><rect x="1" y="1" width="2" height="2" fill="#fff"/><rect x="0" y="0" width="2" height="2" fill="#444"/></svg>
<svg style="left:1130px;top:869px" width="3" height="3"><rect x="1" y="1" width="2" height="2" fill="#fff"/><rect x="0" y="0" width="2" height="2" fill="#444"/></svg>
<svg style="left:1134px;top:869px" width="3" height="3"><rect x="1" y="1" width="2" height="2" fill="#fff"/><rect x="0" y="0" width="2" height="2" fill="#444"/></svg>
<div style="left:333px;top:766px;width:1570px;height:97px;border:1px solid #dcdcdc;"></div>
<div style="left:340px;top:760px;width:243px;height:12px;background:#fff;"></div>
<div class="t " style="left:343px;top:757.69px;font-size:11px;line-height:17px;color:#000;letter-spacing:0.25px;">Seçili Folio ya Ait Restoran Adisyon Listesi</div>
<div style="left:338px;top:777px;width:1560px;height:82px;border:1px solid #a0a4aa;background:#fff;"></div>
<div style="left:339px;top:796px;width:1067px;height:1px;background:#dcdcdc;"></div>
<div style="left:339px;top:814px;width:1067px;height:1px;background:#e6e6e6;"></div>
<div style="left:351px;top:778px;width:1px;height:36px;background:#e2e2e2;"></div>
<div class="t " style="left:354px;top:779.69px;font-size:11px;line-height:17px;color:#000;letter-spacing:0.4px;">Kayıt Tarihi</div>
<div style="left:595px;top:778px;width:1px;height:36px;background:#e2e2e2;"></div>
<div class="t " style="left:598px;top:779.69px;font-size:11px;line-height:17px;color:#000;letter-spacing:0.4px;">Ürün Adı</div>
<div style="left:922px;top:778px;width:1px;height:36px;background:#e2e2e2;"></div>
<div class="t " style="left:925px;top:779.69px;font-size:11px;line-height:17px;color:#000;letter-spacing:0.4px;">Fiyatı</div>
<div style="left:1023px;top:778px;width:1px;height:36px;background:#e2e2e2;"></div>
<div class="t " style="left:1026px;top:779.69px;font-size:11px;line-height:17px;color:#000;letter-spacing:0.4px;">Miktarı</div>
<div style="left:1074px;top:778px;width:1px;height:36px;background:#e2e2e2;"></div>
<div class="t " style="left:1077px;top:779.69px;font-size:11px;line-height:17px;color:#000;letter-spacing:0.4px;">Toplam Tutar</div>
<div style="left:1175px;top:778px;width:1px;height:36px;background:#e2e2e2;"></div>
<div class="t " style="left:1178px;top:779.69px;font-size:11px;line-height:17px;color:#000;letter-spacing:0.4px;">İptal Durumu</div>
<div style="left:1262px;top:778px;width:1px;height:36px;background:#e2e2e2;"></div>
<div class="t " style="left:1265px;top:779.69px;font-size:11px;line-height:17px;color:#000;letter-spacing:0.4px;">İptal Nedeni</div>
<div style="left:1406px;top:778px;width:1px;height:36px;background:#e2e2e2;"></div>
<svg style="left:341px;top:783px" width="10" height="10"><rect x="1" y="1" width="1.8" height="1.8" fill="#222"/><rect x="6" y="1" width="1.8" height="1.8" fill="#222"/><rect x="1" y="6" width="1.8" height="1.8" fill="#222"/><rect x="6" y="6" width="1.8" height="1.8" fill="#222"/></svg>
<div style="left:333px;top:877px;width:1570px;height:76px;border:1px solid #a0a4aa;background:#fff;"></div>
<div style="left:347px;top:879px;width:80px;height:17px;background:#f0f0f0;border-right:2px solid #a8a8a8;border-bottom:2px solid #a8a8a8;"></div>
<div class="t " style="left:349px;top:879.69px;font-size:11px;line-height:17px;color:#000;letter-spacing:0.4px;">Döviz Birimi</div>
<div style="left:428px;top:879px;width:85px;height:17px;background:#f0f0f0;border-right:2px solid #a8a8a8;border-bottom:2px solid #a8a8a8;"></div>
<div class="t " style="left:430px;top:879.69px;font-size:11px;line-height:17px;color:#000;letter-spacing:0.4px;">Oda Ücreti</div>
<div style="left:514px;top:879px;width:88px;height:17px;background:#f0f0f0;border-right:2px solid #a8a8a8;border-bottom:2px solid #a8a8a8;"></div>
<div class="t " style="left:516px;top:879.69px;font-size:11px;line-height:17px;color:#000;letter-spacing:0.4px;">Ekstra</div>
<div style="left:603px;top:879px;width:98px;height:17px;background:#f0f0f0;border-right:2px solid #a8a8a8;border-bottom:2px solid #a8a8a8;"></div>
<div class="t " style="left:605px;top:879.69px;font-size:11px;line-height:17px;color:#000;letter-spacing:0.4px;">Toplam Borç</div>
<div style="left:702px;top:879px;width:111px;height:17px;background:#f0f0f0;border-right:2px solid #a8a8a8;border-bottom:2px solid #a8a8a8;"></div>
<div class="t " style="left:704px;top:879.69px;font-size:11px;line-height:17px;color:#000;letter-spacing:0.4px;">Toplam Alacak</div>
<div style="left:814px;top:879px;width:74px;height:17px;background:#f0f0f0;border-right:2px solid #a8a8a8;border-bottom:2px solid #a8a8a8;"></div>
<div class="t " style="left:816px;top:879.69px;font-size:11px;line-height:17px;color:#000;letter-spacing:0.4px;">Bakiye</div>
<div style="left:889px;top:879px;width:82px;height:17px;background:#f0f0f0;border-right:2px solid #a8a8a8;border-bottom:2px solid #a8a8a8;"></div>
<div class="t " style="left:891px;top:879.69px;font-size:11px;line-height:17px;color:#000;letter-spacing:0.4px;">Bakiye Türü</div>
<svg style="left:336px;top:883px" width="10" height="10"><rect x="1" y="1" width="1.8" height="1.8" fill="#222"/><rect x="6" y="1" width="1.8" height="1.8" fill="#222"/><rect x="1" y="6" width="1.8" height="1.8" fill="#222"/><rect x="6" y="6" width="1.8" height="1.8" fill="#222"/></svg>
<div style="left:334px;top:914px;width:12px;height:1px;background:#dcdcdc;"></div>
<div style="left:347px;top:897px;width:79px;height:17px;background:#cfe6fc;"></div>
<div class="t " style="left:349px;top:897.69px;font-size:11px;line-height:17px;color:#000;letter-spacing:0.4px;">TL</div>
<div style="left:428px;top:897px;width:84px;height:17px;background:#fdcaca;"></div>
<div class="t " style="left:428px;top:897.69px;font-size:11px;line-height:17px;color:#000;letter-spacing:0.6px;width:83px;text-align:right;overflow:hidden;">63.000,00</div>
<div style="left:514px;top:897px;width:87px;height:17px;background:#fdcaca;"></div>
<div class="t " style="left:514px;top:897.69px;font-size:11px;line-height:17px;color:#000;letter-spacing:0.6px;width:86px;text-align:right;overflow:hidden;">600,00</div>
<div style="left:603px;top:897px;width:97px;height:17px;background:#fdcaca;"></div>
<div class="t " style="left:603px;top:897.69px;font-size:11px;line-height:17px;color:#000;letter-spacing:0.6px;width:96px;text-align:right;overflow:hidden;">63.600,00</div>
<div style="left:702px;top:897px;width:110px;height:17px;background:#b6f7b6;"></div>
<div class="t " style="left:702px;top:897.69px;font-size:11px;line-height:17px;color:#000;letter-spacing:0.6px;width:109px;text-align:right;overflow:hidden;">0,00</div>
<div style="left:814px;top:897px;width:73px;height:17px;background:#a9d3fb;"></div>
<div class="t " style="left:814px;top:897.69px;font-size:11px;line-height:17px;color:#000;letter-spacing:0.6px;width:72px;text-align:right;overflow:hidden;">63.600,00</div>
<div style="left:889px;top:897px;width:81px;height:17px;background:#a9d3fb;"></div>
<div class="t " style="left:891px;top:897.69px;font-size:11px;line-height:17px;color:#000;letter-spacing:0.4px;">Borç</div>
<div style="left:334px;top:932px;width:12px;height:1px;background:#dcdcdc;"></div>
<div style="left:347px;top:915px;width:79px;height:17px;background:#fff;"></div>
<div class="t " style="left:349px;top:915.69px;font-size:11px;line-height:17px;color:#000;letter-spacing:0.4px;">Toplam</div>
<div style="left:428px;top:915px;width:84px;height:17px;background:#fdcaca;"></div>
<div class="t " style="left:428px;top:915.69px;font-size:11px;line-height:17px;color:#000;letter-spacing:0.6px;width:83px;text-align:right;overflow:hidden;">63.000,00</div>
<div style="left:514px;top:915px;width:87px;height:17px;background:#fdcaca;"></div>
<div class="t " style="left:514px;top:915.69px;font-size:11px;line-height:17px;color:#000;letter-spacing:0.6px;width:86px;text-align:right;overflow:hidden;">600,00</div>
<div style="left:603px;top:915px;width:97px;height:17px;background:#fdcaca;"></div>
<div class="t " style="left:603px;top:915.69px;font-size:11px;line-height:17px;color:#000;letter-spacing:0.6px;width:96px;text-align:right;overflow:hidden;">63.600,00</div>
<div style="left:702px;top:915px;width:110px;height:17px;background:#b6f7b6;"></div>
<div class="t " style="left:702px;top:915.69px;font-size:11px;line-height:17px;color:#000;letter-spacing:0.6px;width:109px;text-align:right;overflow:hidden;">0,00</div>
<div style="left:814px;top:915px;width:73px;height:17px;background:#a9d3fb;"></div>
<div class="t " style="left:814px;top:915.69px;font-size:11px;line-height:17px;color:#000;letter-spacing:0.6px;width:72px;text-align:right;overflow:hidden;">63.600,00</div>
<div style="left:889px;top:915px;width:81px;height:17px;background:#a9d3fb;"></div>
<div class="t " style="left:891px;top:915.69px;font-size:11px;line-height:17px;color:#000;letter-spacing:0.4px;">Borç</div>
<svg style="left:338px;top:918px" width="6" height="11"><path d="M0 0 L5.5 5.5 L0 11 Z" fill="#000"/></svg>
</body></html>
